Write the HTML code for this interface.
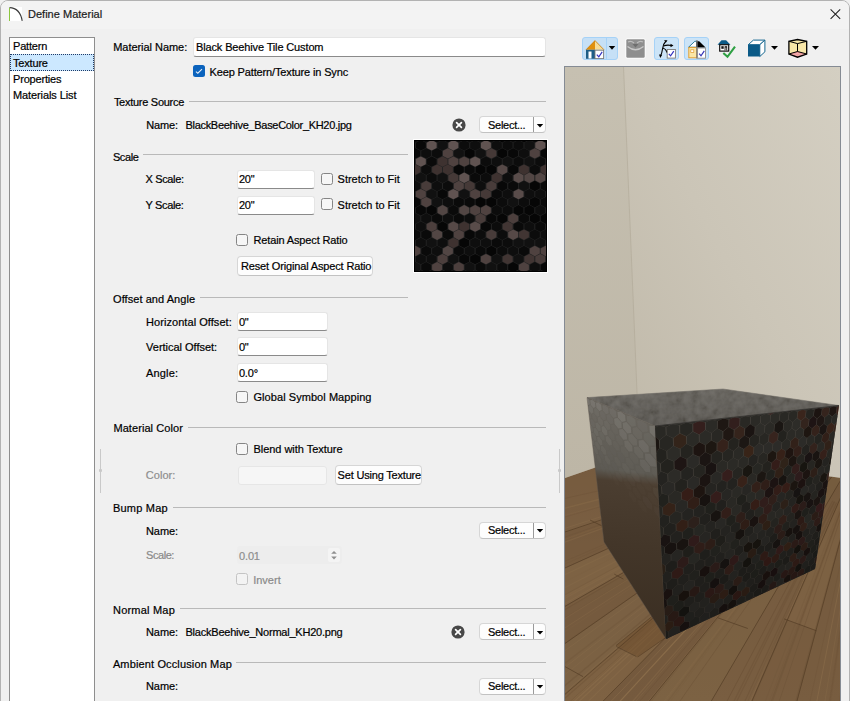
<!DOCTYPE html><html><head><meta charset="utf-8"><style>html,body{margin:0;padding:0;width:850px;height:701px;overflow:hidden;background:#f0f0f0}.t{position:absolute;white-space:nowrap;line-height:13px;font-family:"Liberation Sans", sans-serif;-webkit-text-stroke:0.2px currentColor}</style></head><body><div style="position:absolute;left:0;top:0;width:848px;height:720px;border:1px solid #b2b2b2;border-radius:8px 8px 0 0;background:#f0f0f0;overflow:hidden"><div style="position:absolute;left:0;top:0;width:848px;height:28px;background:#f3f3f3"></div></div><svg style="position:absolute;left:8px;top:6px" width="16" height="16"><rect x="1" y="1" width="13" height="14" fill="#fff"/><path d="M1.5 1.6 Q12 2 14.2 14.8" fill="none" stroke="#3a3a3a" stroke-width="1.1"/><path d="M1.5 1.8 L1.5 15" stroke="#8cc63f" stroke-width="1"/></svg><div class="t" style="left:28.00px;top:7.79px;font-size:11px;letter-spacing:0.014px;color:#1b1b1b;">Define Material</div><svg style="position:absolute;left:828px;top:7px" width="14" height="14"><path d="M2.6 2.3 L12.2 11.8 M12.2 2.3 L2.6 11.8" stroke="#202020" stroke-width="1.05"/></svg><div style="position:absolute;left:9px;top:37px;width:84px;height:680px;border:1px solid #8e8e8e;background:#fff"></div><div style="position:absolute;left:10px;top:54px;width:82px;height:15px;background:#cce8ff;border:1px dotted #1f3a66"></div><div class="t" style="left:13.00px;top:40.39px;font-size:11px;letter-spacing:-0.180px;color:#000;">Pattern</div><div class="t" style="left:13.00px;top:56.69px;font-size:11px;letter-spacing:-0.180px;color:#000;">Texture</div><div class="t" style="left:13.00px;top:73.09px;font-size:11px;letter-spacing:-0.180px;color:#000;">Properties</div><div class="t" style="left:13.00px;top:89.39px;font-size:11px;letter-spacing:-0.100px;color:#000;">Materials List</div><div class="t" style="left:113.20px;top:41.19px;font-size:11px;letter-spacing:-0.041px;color:#000;">Material Name:</div><div style="position:absolute;left:193px;top:37px;width:351px;height:18px;border:1px solid #e5e5e5;border-bottom:1px solid #8a8a8a;border-radius:3px;background:#fff"></div><div class="t" style="left:196.00px;top:41.29px;font-size:11px;letter-spacing:-0.138px;color:#000;">Black Beehive Tile Custom</div><div style="position:absolute;left:193px;top:65px;width:12px;height:12px;border-radius:2.5px;background:#0b63bd"></div><svg style="position:absolute;left:193px;top:65px" width="12" height="12"><path d="M2.9 6.6 L4.8 8.2 L9 4.1" fill="none" stroke="#e6eef8" stroke-width="1.05"/></svg><div class="t" style="left:209.60px;top:65.69px;font-size:11px;letter-spacing:-0.145px;color:#000;">Keep Pattern/Texture in Sync</div><div class="t" style="left:113.90px;top:96.19px;font-size:11px;letter-spacing:-0.270px;color:#000;">Texture Source</div><div style="position:absolute;left:189px;top:101px;width:357px;height:1px;background:#b9b9b9"></div><div class="t" style="left:146.20px;top:118.99px;font-size:11px;letter-spacing:-0.161px;color:#000;">Name:</div><div class="t" style="left:185.50px;top:118.99px;font-size:11px;letter-spacing:-0.306px;color:#000;">BlackBeehive_BaseColor_KH20.jpg</div><svg style="position:absolute;left:450.8px;top:116.6px" width="16" height="16"><circle cx="8" cy="8" r="6.6" fill="#484848"/><path d="M5.6 5.6 L10.4 10.4 M10.4 5.6 L5.6 10.4" stroke="#fff" stroke-width="1.7" stroke-linecap="round"/></svg><div style="position:absolute;left:479px;top:116px;width:65px;height:15px;border:1px solid #d6d6d6;border-bottom-color:#c2c2c2;border-radius:4px;background:#fdfdfd"></div><div style="position:absolute;left:533px;top:117px;width:1px;height:15px;background:#9a9a9a"></div><svg style="position:absolute;left:536px;top:122.5px" width="8" height="6"><path d="M0.8 1 L7.2 1 L4 4.6 Z" fill="#000"/></svg><div class="t" style="left:488.00px;top:118.89px;font-size:11px;letter-spacing:-0.272px;color:#000;">Select...</div><div class="t" style="left:112.90px;top:150.59px;font-size:11px;letter-spacing:-0.406px;color:#000;">Scale</div><div style="position:absolute;left:143px;top:154px;width:265px;height:1px;background:#b9b9b9"></div><div class="t" style="left:145.60px;top:173.19px;font-size:11px;letter-spacing:-0.371px;color:#000;">X Scale:</div><div style="position:absolute;left:237px;top:170px;width:76px;height:17px;border:1px solid #e5e5e5;border-bottom:1px solid #8a8a8a;border-radius:3px;background:#fff"></div><div class="t" style="left:238.90px;top:173.19px;font-size:11px;letter-spacing:-0.180px;color:#000;">20&quot;</div><div style="position:absolute;left:321px;top:173px;width:10px;height:10px;border:1px solid #858585;border-radius:2.5px;background:#f6f6f6"></div><div class="t" style="left:337.60px;top:173.19px;font-size:11px;letter-spacing:-0.011px;color:#000;">Stretch to Fit</div><div class="t" style="left:145.60px;top:198.59px;font-size:11px;letter-spacing:-0.348px;color:#000;">Y Scale:</div><div style="position:absolute;left:237px;top:196px;width:76px;height:17px;border:1px solid #e5e5e5;border-bottom:1px solid #8a8a8a;border-radius:3px;background:#fff"></div><div class="t" style="left:238.90px;top:198.59px;font-size:11px;letter-spacing:-0.180px;color:#000;">20&quot;</div><div style="position:absolute;left:321px;top:198px;width:10px;height:10px;border:1px solid #858585;border-radius:2.5px;background:#f6f6f6"></div><div class="t" style="left:337.60px;top:198.59px;font-size:11px;letter-spacing:-0.011px;color:#000;">Stretch to Fit</div><div style="position:absolute;left:236px;top:234px;width:10px;height:10px;border:1px solid #858585;border-radius:2.5px;background:#f6f6f6"></div><div class="t" style="left:253.50px;top:234.49px;font-size:11px;letter-spacing:-0.138px;color:#000;">Retain Aspect Ratio</div><div style="position:absolute;left:237px;top:256px;width:134px;height:18px;border:1px solid #d6d6d6;border-bottom-color:#c2c2c2;border-radius:4px;background:#fdfdfd"></div><div class="t" style="left:241.00px;top:260.19px;font-size:11px;letter-spacing:-0.156px;color:#000;">Reset Original Aspect Ratio</div><div class="t" style="left:113.10px;top:292.59px;font-size:11px;letter-spacing:0.054px;color:#000;">Offset and Angle</div><div style="position:absolute;left:200px;top:297px;width:208px;height:1px;background:#b9b9b9"></div><div class="t" style="left:146.10px;top:315.59px;font-size:11px;letter-spacing:0.051px;color:#000;">Horizontal Offset:</div><div style="position:absolute;left:237px;top:312px;width:89px;height:17px;border:1px solid #e5e5e5;border-bottom:1px solid #8a8a8a;border-radius:3px;background:#fff"></div><div class="t" style="left:238.90px;top:315.59px;font-size:11px;letter-spacing:-0.180px;color:#000;">0&quot;</div><div class="t" style="left:146.10px;top:341.29px;font-size:11px;letter-spacing:-0.021px;color:#000;">Vertical Offset:</div><div style="position:absolute;left:237px;top:337px;width:89px;height:17px;border:1px solid #e5e5e5;border-bottom:1px solid #8a8a8a;border-radius:3px;background:#fff"></div><div class="t" style="left:238.90px;top:341.29px;font-size:11px;letter-spacing:-0.180px;color:#000;">0&quot;</div><div class="t" style="left:146.10px;top:366.89px;font-size:11px;letter-spacing:0.133px;color:#000;">Angle:</div><div style="position:absolute;left:237px;top:363px;width:89px;height:17px;border:1px solid #e5e5e5;border-bottom:1px solid #8a8a8a;border-radius:3px;background:#fff"></div><div class="t" style="left:238.90px;top:366.89px;font-size:11px;letter-spacing:-0.180px;color:#000;">0.0&deg;</div><div style="position:absolute;left:236px;top:391px;width:10px;height:10px;border:1px solid #858585;border-radius:2.5px;background:#f6f6f6"></div><div class="t" style="left:253.50px;top:391.49px;font-size:11px;letter-spacing:0.057px;color:#000;">Global Symbol Mapping</div><div class="t" style="left:113.40px;top:422.19px;font-size:11px;letter-spacing:0.074px;color:#000;">Material Color</div><div style="position:absolute;left:188px;top:427px;width:358px;height:1px;background:#b9b9b9"></div><div style="position:absolute;left:236px;top:443px;width:10px;height:10px;border:1px solid #858585;border-radius:2.5px;background:#f6f6f6"></div><div class="t" style="left:253.50px;top:443.29px;font-size:11px;letter-spacing:-0.038px;color:#000;">Blend with Texture</div><div class="t" style="left:145.80px;top:469.49px;font-size:11px;letter-spacing:0.026px;color:#8d8d8d;">Color:</div><div style="position:absolute;left:238px;top:466px;width:87px;height:17px;border:1px solid #e6e6e6;border-radius:3px;background:#f6f6f6"></div><div style="position:absolute;left:335px;top:465px;width:85px;height:18px;border:1px solid #d6d6d6;border-bottom-color:#c2c2c2;border-radius:4px;background:#fdfdfd"></div><div class="t" style="left:337.60px;top:469.39px;font-size:11px;letter-spacing:-0.190px;color:#000;">Set Using Texture</div><div style="position:absolute;left:100px;top:449px;width:1px;height:44px;background:#c9c9c9"></div><div style="position:absolute;left:99px;top:469px;width:3px;height:3px;background:#c9c9c9;border-radius:1px"></div><div style="position:absolute;left:559px;top:449px;width:1px;height:44px;background:#c9c9c9"></div><div style="position:absolute;left:558px;top:469px;width:3px;height:3px;background:#c9c9c9;border-radius:1px"></div><div class="t" style="left:112.90px;top:502.19px;font-size:11px;letter-spacing:0.225px;color:#000;">Bump Map</div><div style="position:absolute;left:173px;top:507px;width:373px;height:1px;background:#b9b9b9"></div><div class="t" style="left:146.00px;top:524.69px;font-size:11px;letter-spacing:-0.081px;color:#000;">Name:</div><div style="position:absolute;left:479px;top:521.5px;width:65px;height:15px;border:1px solid #d6d6d6;border-bottom-color:#c2c2c2;border-radius:4px;background:#fdfdfd"></div><div style="position:absolute;left:533px;top:522.5px;width:1px;height:15px;background:#9a9a9a"></div><svg style="position:absolute;left:536px;top:528.0px" width="8" height="6"><path d="M0.8 1 L7.2 1 L4 4.6 Z" fill="#000"/></svg><div class="t" style="left:488.00px;top:524.39px;font-size:11px;letter-spacing:-0.272px;color:#000;">Select...</div><div class="t" style="left:146.00px;top:549.49px;font-size:11px;letter-spacing:-0.430px;color:#8a8a8a;">Scale:</div><div style="position:absolute;left:237px;top:546px;width:105px;height:18px;background:#ededed;border-radius:3px"></div><div class="t" style="left:239.10px;top:549.69px;font-size:11px;letter-spacing:-0.180px;color:#8d8d8d;">0.01</div><div style="position:absolute;left:328px;top:548px;width:12px;height:14px;background:#f4f4f4;border-radius:2px"></div><svg style="position:absolute;left:329px;top:548px" width="10" height="14"><path d="M2.2 5.8 L5 3 L7.8 5.8 Z M2.2 8.6 L5 11.4 L7.8 8.6 Z" fill="#8e8e8e"/></svg><div style="position:absolute;left:236px;top:573px;width:10px;height:10px;border:1px solid #c4c4c4;border-radius:2.5px;background:#f3f3f3"></div><div class="t" style="left:253.20px;top:573.89px;font-size:11px;letter-spacing:-0.003px;color:#8a8a8a;">Invert</div><div class="t" style="left:113.00px;top:604.09px;font-size:11px;letter-spacing:0.209px;color:#000;">Normal Map</div><div style="position:absolute;left:180px;top:608px;width:366px;height:1px;background:#b9b9b9"></div><div class="t" style="left:146.00px;top:626.09px;font-size:11px;letter-spacing:-0.081px;color:#000;">Name:</div><div class="t" style="left:185.50px;top:626.09px;font-size:11px;letter-spacing:-0.224px;color:#000;">BlackBeehive_Normal_KH20.png</div><svg style="position:absolute;left:450.4px;top:624.3px" width="16" height="16"><circle cx="8" cy="8" r="6.6" fill="#484848"/><path d="M5.6 5.6 L10.4 10.4 M10.4 5.6 L5.6 10.4" stroke="#fff" stroke-width="1.7" stroke-linecap="round"/></svg><div style="position:absolute;left:479px;top:623.3px;width:65px;height:15px;border:1px solid #d6d6d6;border-bottom-color:#c2c2c2;border-radius:4px;background:#fdfdfd"></div><div style="position:absolute;left:533px;top:624.3px;width:1px;height:15px;background:#9a9a9a"></div><svg style="position:absolute;left:536px;top:629.8px" width="8" height="6"><path d="M0.8 1 L7.2 1 L4 4.6 Z" fill="#000"/></svg><div class="t" style="left:488.00px;top:626.19px;font-size:11px;letter-spacing:-0.272px;color:#000;">Select...</div><div class="t" style="left:112.90px;top:657.69px;font-size:11px;letter-spacing:0.135px;color:#000;">Ambient Occlusion Map</div><div style="position:absolute;left:236px;top:662px;width:310px;height:1px;background:#b9b9b9"></div><div class="t" style="left:146.00px;top:680.49px;font-size:11px;letter-spacing:-0.081px;color:#000;">Name:</div><div style="position:absolute;left:479px;top:677.6px;width:65px;height:15px;border:1px solid #d6d6d6;border-bottom-color:#c2c2c2;border-radius:4px;background:#fdfdfd"></div><div style="position:absolute;left:533px;top:678.6px;width:1px;height:15px;background:#9a9a9a"></div><svg style="position:absolute;left:536px;top:684.1px" width="8" height="6"><path d="M0.8 1 L7.2 1 L4 4.6 Z" fill="#000"/></svg><div class="t" style="left:488.00px;top:680.49px;font-size:11px;letter-spacing:-0.272px;color:#000;">Select...</div><svg style="position:absolute;left:413px;top:139px" width="135" height="134"><rect x="0" y="0" width="135" height="134" fill="#fff"/><svg x="1" y="1" width="133" height="132"><rect width="133" height="132" fill="#232323"/><polygon points="-9.5,-8.0 -4.5,-5.4 -4.5,-0.2 -9.5,2.4 -14.4,-0.2 -14.4,-5.4" fill="rgb(8,8,8)"/><polygon points="1.4,-8.0 6.3,-5.4 6.3,-0.2 1.4,2.4 -3.6,-0.2 -3.6,-5.4" fill="rgb(14,14,14)"/><polygon points="12.2,-8.0 17.2,-5.4 17.2,-0.2 12.2,2.4 7.3,-0.2 7.3,-5.4" fill="rgb(14,14,14)"/><polygon points="23.1,-8.0 28.0,-5.4 28.0,-0.2 23.1,2.4 18.1,-0.2 18.1,-5.4" fill="rgb(8,8,8)"/><polygon points="33.9,-8.0 38.9,-5.4 38.9,-0.2 33.9,2.4 29.0,-0.2 29.0,-5.4" fill="rgb(10,10,10)"/><polygon points="44.8,-8.0 49.8,-5.4 49.8,-0.2 44.8,2.4 39.9,-0.2 39.9,-5.4" fill="rgb(14,14,14)"/><polygon points="55.7,-8.0 60.6,-5.4 60.6,-0.2 55.7,2.4 50.7,-0.2 50.7,-5.4" fill="rgb(12,12,12)"/><polygon points="66.5,-8.0 71.5,-5.4 71.5,-0.2 66.5,2.4 61.6,-0.2 61.6,-5.4" fill="rgb(17,17,17)"/><polygon points="77.4,-8.0 82.3,-5.4 82.3,-0.2 77.4,2.4 72.4,-0.2 72.4,-5.4" fill="rgb(14,14,14)"/><polygon points="88.2,-8.0 93.2,-5.4 93.2,-0.2 88.2,2.4 83.3,-0.2 83.3,-5.4" fill="rgb(6,6,6)"/><polygon points="99.1,-8.0 104.1,-5.4 104.1,-0.2 99.1,2.4 94.2,-0.2 94.2,-5.4" fill="rgb(14,14,14)"/><polygon points="110.0,-8.0 114.9,-5.4 114.9,-0.2 110.0,2.4 105.0,-0.2 105.0,-5.4" fill="rgb(6,6,6)"/><polygon points="120.8,-8.0 125.8,-5.4 125.8,-0.2 120.8,2.4 115.9,-0.2 115.9,-5.4" fill="rgb(12,12,12)"/><polygon points="131.7,-8.0 136.6,-5.4 136.6,-0.2 131.7,2.4 126.7,-0.2 126.7,-5.4" fill="rgb(10,10,10)"/><polygon points="142.5,-8.0 147.5,-5.4 147.5,-0.2 142.5,2.4 137.6,-0.2 137.6,-5.4" fill="rgb(14,14,14)"/><polygon points="-4.1,0.1 0.9,2.7 0.9,7.9 -4.1,10.5 -9.0,7.9 -9.0,2.7" fill="rgb(8,8,8)"/><polygon points="6.8,0.1 11.8,2.7 11.8,7.9 6.8,10.5 1.9,7.9 1.9,2.7" fill="rgb(8,8,8)"/><polygon points="17.7,0.1 22.6,2.7 22.6,7.9 17.7,10.5 12.7,7.9 12.7,2.7" fill="rgb(96,83,81)"/><polygon points="28.5,0.1 33.5,2.7 33.5,7.9 28.5,10.5 23.6,7.9 23.6,2.7" fill="rgb(17,17,17)"/><polygon points="39.4,0.1 44.3,2.7 44.3,7.9 39.4,10.5 34.4,7.9 34.4,2.7" fill="rgb(96,83,81)"/><polygon points="50.2,0.1 55.2,2.7 55.2,7.9 50.2,10.5 45.3,7.9 45.3,2.7" fill="rgb(12,12,12)"/><polygon points="61.1,0.1 66.1,2.7 66.1,7.9 61.1,10.5 56.2,7.9 56.2,2.7" fill="rgb(14,14,14)"/><polygon points="72.0,0.1 76.9,2.7 76.9,7.9 72.0,10.5 67.0,7.9 67.0,2.7" fill="rgb(96,83,81)"/><polygon points="82.8,0.1 87.8,2.7 87.8,7.9 82.8,10.5 77.9,7.9 77.9,2.7" fill="rgb(14,14,14)"/><polygon points="93.7,0.1 98.6,2.7 98.6,7.9 93.7,10.5 88.7,7.9 88.7,2.7" fill="rgb(12,12,12)"/><polygon points="104.5,0.1 109.5,2.7 109.5,7.9 104.5,10.5 99.6,7.9 99.6,2.7" fill="rgb(12,12,12)"/><polygon points="115.4,0.1 120.3,2.7 120.3,7.9 115.4,10.5 110.4,7.9 110.4,2.7" fill="rgb(17,17,17)"/><polygon points="126.3,0.1 131.2,2.7 131.2,7.9 126.3,10.5 121.3,7.9 121.3,2.7" fill="rgb(96,83,81)"/><polygon points="137.1,0.1 142.1,2.7 142.1,7.9 137.1,10.5 132.2,7.9 132.2,2.7" fill="rgb(8,8,8)"/><polygon points="148.0,0.1 152.9,2.7 152.9,7.9 148.0,10.5 143.0,7.9 143.0,2.7" fill="rgb(8,8,8)"/><polygon points="-9.5,8.2 -4.5,10.8 -4.5,16.0 -9.5,18.6 -14.4,16.0 -14.4,10.8" fill="rgb(17,17,17)"/><polygon points="1.4,8.2 6.3,10.8 6.3,16.0 1.4,18.6 -3.6,16.0 -3.6,10.8" fill="rgb(8,8,8)"/><polygon points="12.2,8.2 17.2,10.8 17.2,16.0 12.2,18.6 7.3,16.0 7.3,10.8" fill="rgb(14,14,14)"/><polygon points="23.1,8.2 28.0,10.8 28.0,16.0 23.1,18.6 18.1,16.0 18.1,10.8" fill="rgb(12,12,12)"/><polygon points="33.9,8.2 38.9,10.8 38.9,16.0 33.9,18.6 29.0,16.0 29.0,10.8" fill="rgb(79,66,64)"/><polygon points="44.8,8.2 49.8,10.8 49.8,16.0 44.8,18.6 39.9,16.0 39.9,10.8" fill="rgb(17,17,17)"/><polygon points="55.7,8.2 60.6,10.8 60.6,16.0 55.7,18.6 50.7,16.0 50.7,10.8" fill="rgb(6,6,6)"/><polygon points="66.5,8.2 71.5,10.8 71.5,16.0 66.5,18.6 61.6,16.0 61.6,10.8" fill="rgb(17,17,17)"/><polygon points="77.4,8.2 82.3,10.8 82.3,16.0 77.4,18.6 72.4,16.0 72.4,10.8" fill="rgb(69,57,55)"/><polygon points="88.2,8.2 93.2,10.8 93.2,16.0 88.2,18.6 83.3,16.0 83.3,10.8" fill="rgb(6,6,6)"/><polygon points="99.1,8.2 104.1,10.8 104.1,16.0 99.1,18.6 94.2,16.0 94.2,10.8" fill="rgb(8,8,8)"/><polygon points="110.0,8.2 114.9,10.8 114.9,16.0 110.0,18.6 105.0,16.0 105.0,10.8" fill="rgb(14,14,14)"/><polygon points="120.8,8.2 125.8,10.8 125.8,16.0 120.8,18.6 115.9,16.0 115.9,10.8" fill="rgb(79,66,64)"/><polygon points="131.7,8.2 136.6,10.8 136.6,16.0 131.7,18.6 126.7,16.0 126.7,10.8" fill="rgb(6,6,6)"/><polygon points="142.5,8.2 147.5,10.8 147.5,16.0 142.5,18.6 137.6,16.0 137.6,10.8" fill="rgb(10,10,10)"/><polygon points="-4.1,16.4 0.9,19.0 0.9,24.2 -4.1,26.8 -9.0,24.2 -9.0,19.0" fill="rgb(6,6,6)"/><polygon points="6.8,16.4 11.8,19.0 11.8,24.2 6.8,26.8 1.9,24.2 1.9,19.0" fill="rgb(96,83,81)"/><polygon points="17.7,16.4 22.6,19.0 22.6,24.2 17.7,26.8 12.7,24.2 12.7,19.0" fill="rgb(10,10,10)"/><polygon points="28.5,16.4 33.5,19.0 33.5,24.2 28.5,26.8 23.6,24.2 23.6,19.0" fill="rgb(62,50,48)"/><polygon points="39.4,16.4 44.3,19.0 44.3,24.2 39.4,26.8 34.4,24.2 34.4,19.0" fill="rgb(79,66,64)"/><polygon points="50.2,16.4 55.2,19.0 55.2,24.2 50.2,26.8 45.3,24.2 45.3,19.0" fill="rgb(79,66,64)"/><polygon points="61.1,16.4 66.1,19.0 66.1,24.2 61.1,26.8 56.2,24.2 56.2,19.0" fill="rgb(96,83,81)"/><polygon points="72.0,16.4 76.9,19.0 76.9,24.2 72.0,26.8 67.0,24.2 67.0,19.0" fill="rgb(12,12,12)"/><polygon points="82.8,16.4 87.8,19.0 87.8,24.2 82.8,26.8 77.9,24.2 77.9,19.0" fill="rgb(14,14,14)"/><polygon points="93.7,16.4 98.6,19.0 98.6,24.2 93.7,26.8 88.7,24.2 88.7,19.0" fill="rgb(17,17,17)"/><polygon points="104.5,16.4 109.5,19.0 109.5,24.2 104.5,26.8 99.6,24.2 99.6,19.0" fill="rgb(12,12,12)"/><polygon points="115.4,16.4 120.3,19.0 120.3,24.2 115.4,26.8 110.4,24.2 110.4,19.0" fill="rgb(17,17,17)"/><polygon points="126.3,16.4 131.2,19.0 131.2,24.2 126.3,26.8 121.3,24.2 121.3,19.0" fill="rgb(12,12,12)"/><polygon points="137.1,16.4 142.1,19.0 142.1,24.2 137.1,26.8 132.2,24.2 132.2,19.0" fill="rgb(12,12,12)"/><polygon points="148.0,16.4 152.9,19.0 152.9,24.2 148.0,26.8 143.0,24.2 143.0,19.0" fill="rgb(17,17,17)"/><polygon points="-9.5,24.5 -4.5,27.1 -4.5,32.3 -9.5,34.9 -14.4,32.3 -14.4,27.1" fill="rgb(14,14,14)"/><polygon points="1.4,24.5 6.3,27.1 6.3,32.3 1.4,34.9 -3.6,32.3 -3.6,27.1" fill="rgb(62,50,48)"/><polygon points="12.2,24.5 17.2,27.1 17.2,32.3 12.2,34.9 7.3,32.3 7.3,27.1" fill="rgb(12,12,12)"/><polygon points="23.1,24.5 28.0,27.1 28.0,32.3 23.1,34.9 18.1,32.3 18.1,27.1" fill="rgb(62,50,48)"/><polygon points="33.9,24.5 38.9,27.1 38.9,32.3 33.9,34.9 29.0,32.3 29.0,27.1" fill="rgb(62,50,48)"/><polygon points="44.8,24.5 49.8,27.1 49.8,32.3 44.8,34.9 39.9,32.3 39.9,27.1" fill="rgb(8,8,8)"/><polygon points="55.7,24.5 60.6,27.1 60.6,32.3 55.7,34.9 50.7,32.3 50.7,27.1" fill="rgb(10,10,10)"/><polygon points="66.5,24.5 71.5,27.1 71.5,32.3 66.5,34.9 61.6,32.3 61.6,27.1" fill="rgb(6,6,6)"/><polygon points="77.4,24.5 82.3,27.1 82.3,32.3 77.4,34.9 72.4,32.3 72.4,27.1" fill="rgb(6,6,6)"/><polygon points="88.2,24.5 93.2,27.1 93.2,32.3 88.2,34.9 83.3,32.3 83.3,27.1" fill="rgb(86,73,71)"/><polygon points="99.1,24.5 104.1,27.1 104.1,32.3 99.1,34.9 94.2,32.3 94.2,27.1" fill="rgb(8,8,8)"/><polygon points="110.0,24.5 114.9,27.1 114.9,32.3 110.0,34.9 105.0,32.3 105.0,27.1" fill="rgb(62,50,48)"/><polygon points="120.8,24.5 125.8,27.1 125.8,32.3 120.8,34.9 115.9,32.3 115.9,27.1" fill="rgb(12,12,12)"/><polygon points="131.7,24.5 136.6,27.1 136.6,32.3 131.7,34.9 126.7,32.3 126.7,27.1" fill="rgb(62,50,48)"/><polygon points="142.5,24.5 147.5,27.1 147.5,32.3 142.5,34.9 137.6,32.3 137.6,27.1" fill="rgb(8,8,8)"/><polygon points="-4.1,32.6 0.9,35.2 0.9,40.4 -4.1,43.0 -9.0,40.4 -9.0,35.2" fill="rgb(10,10,10)"/><polygon points="6.8,32.6 11.8,35.2 11.8,40.4 6.8,43.0 1.9,40.4 1.9,35.2" fill="rgb(17,17,17)"/><polygon points="17.7,32.6 22.6,35.2 22.6,40.4 17.7,43.0 12.7,40.4 12.7,35.2" fill="rgb(12,12,12)"/><polygon points="28.5,32.6 33.5,35.2 33.5,40.4 28.5,43.0 23.6,40.4 23.6,35.2" fill="rgb(17,17,17)"/><polygon points="39.4,32.6 44.3,35.2 44.3,40.4 39.4,43.0 34.4,40.4 34.4,35.2" fill="rgb(69,57,55)"/><polygon points="50.2,32.6 55.2,35.2 55.2,40.4 50.2,43.0 45.3,40.4 45.3,35.2" fill="rgb(96,83,81)"/><polygon points="61.1,32.6 66.1,35.2 66.1,40.4 61.1,43.0 56.2,40.4 56.2,35.2" fill="rgb(10,10,10)"/><polygon points="72.0,32.6 76.9,35.2 76.9,40.4 72.0,43.0 67.0,40.4 67.0,35.2" fill="rgb(12,12,12)"/><polygon points="82.8,32.6 87.8,35.2 87.8,40.4 82.8,43.0 77.9,40.4 77.9,35.2" fill="rgb(62,50,48)"/><polygon points="93.7,32.6 98.6,35.2 98.6,40.4 93.7,43.0 88.7,40.4 88.7,35.2" fill="rgb(14,14,14)"/><polygon points="104.5,32.6 109.5,35.2 109.5,40.4 104.5,43.0 99.6,40.4 99.6,35.2" fill="rgb(89,76,74)"/><polygon points="115.4,32.6 120.3,35.2 120.3,40.4 115.4,43.0 110.4,40.4 110.4,35.2" fill="rgb(82,70,68)"/><polygon points="126.3,32.6 131.2,35.2 131.2,40.4 126.3,43.0 121.3,40.4 121.3,35.2" fill="rgb(82,70,68)"/><polygon points="137.1,32.6 142.1,35.2 142.1,40.4 137.1,43.0 132.2,40.4 132.2,35.2" fill="rgb(12,12,12)"/><polygon points="148.0,32.6 152.9,35.2 152.9,40.4 148.0,43.0 143.0,40.4 143.0,35.2" fill="rgb(14,14,14)"/><polygon points="-9.5,40.8 -4.5,43.4 -4.5,48.6 -9.5,51.2 -14.4,48.6 -14.4,43.4" fill="rgb(10,10,10)"/><polygon points="1.4,40.8 6.3,43.4 6.3,48.6 1.4,51.2 -3.6,48.6 -3.6,43.4" fill="rgb(14,14,14)"/><polygon points="12.2,40.8 17.2,43.4 17.2,48.6 12.2,51.2 7.3,48.6 7.3,43.4" fill="rgb(72,60,58)"/><polygon points="23.1,40.8 28.0,43.4 28.0,48.6 23.1,51.2 18.1,48.6 18.1,43.4" fill="rgb(14,14,14)"/><polygon points="33.9,40.8 38.9,43.4 38.9,48.6 33.9,51.2 29.0,48.6 29.0,43.4" fill="rgb(12,12,12)"/><polygon points="44.8,40.8 49.8,43.4 49.8,48.6 44.8,51.2 39.9,48.6 39.9,43.4" fill="rgb(79,66,64)"/><polygon points="55.7,40.8 60.6,43.4 60.6,48.6 55.7,51.2 50.7,48.6 50.7,43.4" fill="rgb(69,57,55)"/><polygon points="66.5,40.8 71.5,43.4 71.5,48.6 66.5,51.2 61.6,48.6 61.6,43.4" fill="rgb(14,14,14)"/><polygon points="77.4,40.8 82.3,43.4 82.3,48.6 77.4,51.2 72.4,48.6 72.4,43.4" fill="rgb(72,60,58)"/><polygon points="88.2,40.8 93.2,43.4 93.2,48.6 88.2,51.2 83.3,48.6 83.3,43.4" fill="rgb(8,8,8)"/><polygon points="99.1,40.8 104.1,43.4 104.1,48.6 99.1,51.2 94.2,48.6 94.2,43.4" fill="rgb(10,10,10)"/><polygon points="110.0,40.8 114.9,43.4 114.9,48.6 110.0,51.2 105.0,48.6 105.0,43.4" fill="rgb(17,17,17)"/><polygon points="120.8,40.8 125.8,43.4 125.8,48.6 120.8,51.2 115.9,48.6 115.9,43.4" fill="rgb(6,6,6)"/><polygon points="131.7,40.8 136.6,43.4 136.6,48.6 131.7,51.2 126.7,48.6 126.7,43.4" fill="rgb(10,10,10)"/><polygon points="142.5,40.8 147.5,43.4 147.5,48.6 142.5,51.2 137.6,48.6 137.6,43.4" fill="rgb(14,14,14)"/><polygon points="-4.1,48.9 0.9,51.5 0.9,56.7 -4.1,59.3 -9.0,56.7 -9.0,51.5" fill="rgb(17,17,17)"/><polygon points="6.8,48.9 11.8,51.5 11.8,56.7 6.8,59.3 1.9,56.7 1.9,51.5" fill="rgb(79,66,64)"/><polygon points="17.7,48.9 22.6,51.5 22.6,56.7 17.7,59.3 12.7,56.7 12.7,51.5" fill="rgb(17,17,17)"/><polygon points="28.5,48.9 33.5,51.5 33.5,56.7 28.5,59.3 23.6,56.7 23.6,51.5" fill="rgb(8,8,8)"/><polygon points="39.4,48.9 44.3,51.5 44.3,56.7 39.4,59.3 34.4,56.7 34.4,51.5" fill="rgb(96,83,81)"/><polygon points="50.2,48.9 55.2,51.5 55.2,56.7 50.2,59.3 45.3,56.7 45.3,51.5" fill="rgb(17,17,17)"/><polygon points="61.1,48.9 66.1,51.5 66.1,56.7 61.1,59.3 56.2,56.7 56.2,51.5" fill="rgb(79,66,64)"/><polygon points="72.0,48.9 76.9,51.5 76.9,56.7 72.0,59.3 67.0,56.7 67.0,51.5" fill="rgb(69,57,55)"/><polygon points="82.8,48.9 87.8,51.5 87.8,56.7 82.8,59.3 77.9,56.7 77.9,51.5" fill="rgb(10,10,10)"/><polygon points="93.7,48.9 98.6,51.5 98.6,56.7 93.7,59.3 88.7,56.7 88.7,51.5" fill="rgb(14,14,14)"/><polygon points="104.5,48.9 109.5,51.5 109.5,56.7 104.5,59.3 99.6,56.7 99.6,51.5" fill="rgb(89,76,74)"/><polygon points="115.4,48.9 120.3,51.5 120.3,56.7 115.4,59.3 110.4,56.7 110.4,51.5" fill="rgb(14,14,14)"/><polygon points="126.3,48.9 131.2,51.5 131.2,56.7 126.3,59.3 121.3,56.7 121.3,51.5" fill="rgb(14,14,14)"/><polygon points="137.1,48.9 142.1,51.5 142.1,56.7 137.1,59.3 132.2,56.7 132.2,51.5" fill="rgb(6,6,6)"/><polygon points="148.0,48.9 152.9,51.5 152.9,56.7 148.0,59.3 143.0,56.7 143.0,51.5" fill="rgb(17,17,17)"/><polygon points="-9.5,57.0 -4.5,59.6 -4.5,64.8 -9.5,67.4 -14.4,64.8 -14.4,59.6" fill="rgb(17,17,17)"/><polygon points="1.4,57.0 6.3,59.6 6.3,64.8 1.4,67.4 -3.6,64.8 -3.6,59.6" fill="rgb(8,8,8)"/><polygon points="12.2,57.0 17.2,59.6 17.2,64.8 12.2,67.4 7.3,64.8 7.3,59.6" fill="rgb(79,66,64)"/><polygon points="23.1,57.0 28.0,59.6 28.0,64.8 23.1,67.4 18.1,64.8 18.1,59.6" fill="rgb(17,17,17)"/><polygon points="33.9,57.0 38.9,59.6 38.9,64.8 33.9,67.4 29.0,64.8 29.0,59.6" fill="rgb(14,14,14)"/><polygon points="44.8,57.0 49.8,59.6 49.8,64.8 44.8,67.4 39.9,64.8 39.9,59.6" fill="rgb(10,10,10)"/><polygon points="55.7,57.0 60.6,59.6 60.6,64.8 55.7,67.4 50.7,64.8 50.7,59.6" fill="rgb(10,10,10)"/><polygon points="66.5,57.0 71.5,59.6 71.5,64.8 66.5,67.4 61.6,64.8 61.6,59.6" fill="rgb(6,6,6)"/><polygon points="77.4,57.0 82.3,59.6 82.3,64.8 77.4,67.4 72.4,64.8 72.4,59.6" fill="rgb(6,6,6)"/><polygon points="88.2,57.0 93.2,59.6 93.2,64.8 88.2,67.4 83.3,64.8 83.3,59.6" fill="rgb(12,12,12)"/><polygon points="99.1,57.0 104.1,59.6 104.1,64.8 99.1,67.4 94.2,64.8 94.2,59.6" fill="rgb(17,17,17)"/><polygon points="110.0,57.0 114.9,59.6 114.9,64.8 110.0,67.4 105.0,64.8 105.0,59.6" fill="rgb(12,12,12)"/><polygon points="120.8,57.0 125.8,59.6 125.8,64.8 120.8,67.4 115.9,64.8 115.9,59.6" fill="rgb(6,6,6)"/><polygon points="131.7,57.0 136.6,59.6 136.6,64.8 131.7,67.4 126.7,64.8 126.7,59.6" fill="rgb(10,10,10)"/><polygon points="142.5,57.0 147.5,59.6 147.5,64.8 142.5,67.4 137.6,64.8 137.6,59.6" fill="rgb(6,6,6)"/><polygon points="-4.1,65.1 0.9,67.7 0.9,72.9 -4.1,75.5 -9.0,72.9 -9.0,67.7" fill="rgb(12,12,12)"/><polygon points="6.8,65.1 11.8,67.7 11.8,72.9 6.8,75.5 1.9,72.9 1.9,67.7" fill="rgb(8,8,8)"/><polygon points="17.7,65.1 22.6,67.7 22.6,72.9 17.7,75.5 12.7,72.9 12.7,67.7" fill="rgb(6,6,6)"/><polygon points="28.5,65.1 33.5,67.7 33.5,72.9 28.5,75.5 23.6,72.9 23.6,67.7" fill="rgb(82,70,68)"/><polygon points="39.4,65.1 44.3,67.7 44.3,72.9 39.4,75.5 34.4,72.9 34.4,67.7" fill="rgb(10,10,10)"/><polygon points="50.2,65.1 55.2,67.7 55.2,72.9 50.2,75.5 45.3,72.9 45.3,67.7" fill="rgb(82,70,68)"/><polygon points="61.1,65.1 66.1,67.7 66.1,72.9 61.1,75.5 56.2,72.9 56.2,67.7" fill="rgb(79,66,64)"/><polygon points="72.0,65.1 76.9,67.7 76.9,72.9 72.0,75.5 67.0,72.9 67.0,67.7" fill="rgb(79,66,64)"/><polygon points="82.8,65.1 87.8,67.7 87.8,72.9 82.8,75.5 77.9,72.9 77.9,67.7" fill="rgb(12,12,12)"/><polygon points="93.7,65.1 98.6,67.7 98.6,72.9 93.7,75.5 88.7,72.9 88.7,67.7" fill="rgb(12,12,12)"/><polygon points="104.5,65.1 109.5,67.7 109.5,72.9 104.5,75.5 99.6,72.9 99.6,67.7" fill="rgb(6,6,6)"/><polygon points="115.4,65.1 120.3,67.7 120.3,72.9 115.4,75.5 110.4,72.9 110.4,67.7" fill="rgb(6,6,6)"/><polygon points="126.3,65.1 131.2,67.7 131.2,72.9 126.3,75.5 121.3,72.9 121.3,67.7" fill="rgb(14,14,14)"/><polygon points="137.1,65.1 142.1,67.7 142.1,72.9 137.1,75.5 132.2,72.9 132.2,67.7" fill="rgb(14,14,14)"/><polygon points="148.0,65.1 152.9,67.7 152.9,72.9 148.0,75.5 143.0,72.9 143.0,67.7" fill="rgb(6,6,6)"/><polygon points="-9.5,73.3 -4.5,75.9 -4.5,81.1 -9.5,83.7 -14.4,81.1 -14.4,75.9" fill="rgb(12,12,12)"/><polygon points="1.4,73.3 6.3,75.9 6.3,81.1 1.4,83.7 -3.6,81.1 -3.6,75.9" fill="rgb(17,17,17)"/><polygon points="12.2,73.3 17.2,75.9 17.2,81.1 12.2,83.7 7.3,81.1 7.3,75.9" fill="rgb(14,14,14)"/><polygon points="23.1,73.3 28.0,75.9 28.0,81.1 23.1,83.7 18.1,81.1 18.1,75.9" fill="rgb(10,10,10)"/><polygon points="33.9,73.3 38.9,75.9 38.9,81.1 33.9,83.7 29.0,81.1 29.0,75.9" fill="rgb(14,14,14)"/><polygon points="44.8,73.3 49.8,75.9 49.8,81.1 44.8,83.7 39.9,81.1 39.9,75.9" fill="rgb(10,10,10)"/><polygon points="55.7,73.3 60.6,75.9 60.6,81.1 55.7,83.7 50.7,81.1 50.7,75.9" fill="rgb(14,14,14)"/><polygon points="66.5,73.3 71.5,75.9 71.5,81.1 66.5,83.7 61.6,81.1 61.6,75.9" fill="rgb(72,60,58)"/><polygon points="77.4,73.3 82.3,75.9 82.3,81.1 77.4,83.7 72.4,81.1 72.4,75.9" fill="rgb(8,8,8)"/><polygon points="88.2,73.3 93.2,75.9 93.2,81.1 88.2,83.7 83.3,81.1 83.3,75.9" fill="rgb(6,6,6)"/><polygon points="99.1,73.3 104.1,75.9 104.1,81.1 99.1,83.7 94.2,81.1 94.2,75.9" fill="rgb(76,63,61)"/><polygon points="110.0,73.3 114.9,75.9 114.9,81.1 110.0,83.7 105.0,81.1 105.0,75.9" fill="rgb(10,10,10)"/><polygon points="120.8,73.3 125.8,75.9 125.8,81.1 120.8,83.7 115.9,81.1 115.9,75.9" fill="rgb(6,6,6)"/><polygon points="131.7,73.3 136.6,75.9 136.6,81.1 131.7,83.7 126.7,81.1 126.7,75.9" fill="rgb(6,6,6)"/><polygon points="142.5,73.3 147.5,75.9 147.5,81.1 142.5,83.7 137.6,81.1 137.6,75.9" fill="rgb(6,6,6)"/><polygon points="-4.1,81.4 0.9,84.0 0.9,89.2 -4.1,91.8 -9.0,89.2 -9.0,84.0" fill="rgb(14,14,14)"/><polygon points="6.8,81.4 11.8,84.0 11.8,89.2 6.8,91.8 1.9,89.2 1.9,84.0" fill="rgb(14,14,14)"/><polygon points="17.7,81.4 22.6,84.0 22.6,89.2 17.7,91.8 12.7,89.2 12.7,84.0" fill="rgb(76,63,61)"/><polygon points="28.5,81.4 33.5,84.0 33.5,89.2 28.5,91.8 23.6,89.2 23.6,84.0" fill="rgb(6,6,6)"/><polygon points="39.4,81.4 44.3,84.0 44.3,89.2 39.4,91.8 34.4,89.2 34.4,84.0" fill="rgb(86,73,71)"/><polygon points="50.2,81.4 55.2,84.0 55.2,89.2 50.2,91.8 45.3,89.2 45.3,84.0" fill="rgb(62,50,48)"/><polygon points="61.1,81.4 66.1,84.0 66.1,89.2 61.1,91.8 56.2,89.2 56.2,84.0" fill="rgb(89,76,74)"/><polygon points="72.0,81.4 76.9,84.0 76.9,89.2 72.0,91.8 67.0,89.2 67.0,84.0" fill="rgb(8,8,8)"/><polygon points="82.8,81.4 87.8,84.0 87.8,89.2 82.8,91.8 77.9,89.2 77.9,84.0" fill="rgb(12,12,12)"/><polygon points="93.7,81.4 98.6,84.0 98.6,89.2 93.7,91.8 88.7,89.2 88.7,84.0" fill="rgb(65,53,51)"/><polygon points="104.5,81.4 109.5,84.0 109.5,89.2 104.5,91.8 99.6,89.2 99.6,84.0" fill="rgb(10,10,10)"/><polygon points="115.4,81.4 120.3,84.0 120.3,89.2 115.4,91.8 110.4,89.2 110.4,84.0" fill="rgb(14,14,14)"/><polygon points="126.3,81.4 131.2,84.0 131.2,89.2 126.3,91.8 121.3,89.2 121.3,84.0" fill="rgb(10,10,10)"/><polygon points="137.1,81.4 142.1,84.0 142.1,89.2 137.1,91.8 132.2,89.2 132.2,84.0" fill="rgb(8,8,8)"/><polygon points="148.0,81.4 152.9,84.0 152.9,89.2 148.0,91.8 143.0,89.2 143.0,84.0" fill="rgb(17,17,17)"/><polygon points="-9.5,89.5 -4.5,92.1 -4.5,97.3 -9.5,99.9 -14.4,97.3 -14.4,92.1" fill="rgb(6,6,6)"/><polygon points="1.4,89.5 6.3,92.1 6.3,97.3 1.4,99.9 -3.6,97.3 -3.6,92.1" fill="rgb(10,10,10)"/><polygon points="12.2,89.5 17.2,92.1 17.2,97.3 12.2,99.9 7.3,97.3 7.3,92.1" fill="rgb(10,10,10)"/><polygon points="23.1,89.5 28.0,92.1 28.0,97.3 23.1,99.9 18.1,97.3 18.1,92.1" fill="rgb(82,70,68)"/><polygon points="33.9,89.5 38.9,92.1 38.9,97.3 33.9,99.9 29.0,97.3 29.0,92.1" fill="rgb(10,10,10)"/><polygon points="44.8,89.5 49.8,92.1 49.8,97.3 44.8,99.9 39.9,97.3 39.9,92.1" fill="rgb(79,66,64)"/><polygon points="55.7,89.5 60.6,92.1 60.6,97.3 55.7,99.9 50.7,97.3 50.7,92.1" fill="rgb(8,8,8)"/><polygon points="66.5,89.5 71.5,92.1 71.5,97.3 66.5,99.9 61.6,97.3 61.6,92.1" fill="rgb(12,12,12)"/><polygon points="77.4,89.5 82.3,92.1 82.3,97.3 77.4,99.9 72.4,97.3 72.4,92.1" fill="rgb(72,60,58)"/><polygon points="88.2,89.5 93.2,92.1 93.2,97.3 88.2,99.9 83.3,97.3 83.3,92.1" fill="rgb(12,12,12)"/><polygon points="99.1,89.5 104.1,92.1 104.1,97.3 99.1,99.9 94.2,97.3 94.2,92.1" fill="rgb(86,73,71)"/><polygon points="110.0,89.5 114.9,92.1 114.9,97.3 110.0,99.9 105.0,97.3 105.0,92.1" fill="rgb(65,53,51)"/><polygon points="120.8,89.5 125.8,92.1 125.8,97.3 120.8,99.9 115.9,97.3 115.9,92.1" fill="rgb(12,12,12)"/><polygon points="131.7,89.5 136.6,92.1 136.6,97.3 131.7,99.9 126.7,97.3 126.7,92.1" fill="rgb(14,14,14)"/><polygon points="142.5,89.5 147.5,92.1 147.5,97.3 142.5,99.9 137.6,97.3 137.6,92.1" fill="rgb(12,12,12)"/><polygon points="-4.1,97.7 0.9,100.3 0.9,105.5 -4.1,108.1 -9.0,105.5 -9.0,100.3" fill="rgb(17,17,17)"/><polygon points="6.8,97.7 11.8,100.3 11.8,105.5 6.8,108.1 1.9,105.5 1.9,100.3" fill="rgb(14,14,14)"/><polygon points="17.7,97.7 22.6,100.3 22.6,105.5 17.7,108.1 12.7,105.5 12.7,100.3" fill="rgb(17,17,17)"/><polygon points="28.5,97.7 33.5,100.3 33.5,105.5 28.5,108.1 23.6,105.5 23.6,100.3" fill="rgb(14,14,14)"/><polygon points="39.4,97.7 44.3,100.3 44.3,105.5 39.4,108.1 34.4,105.5 34.4,100.3" fill="rgb(62,50,48)"/><polygon points="50.2,97.7 55.2,100.3 55.2,105.5 50.2,108.1 45.3,105.5 45.3,100.3" fill="rgb(6,6,6)"/><polygon points="61.1,97.7 66.1,100.3 66.1,105.5 61.1,108.1 56.2,105.5 56.2,100.3" fill="rgb(14,14,14)"/><polygon points="72.0,97.7 76.9,100.3 76.9,105.5 72.0,108.1 67.0,105.5 67.0,100.3" fill="rgb(14,14,14)"/><polygon points="82.8,97.7 87.8,100.3 87.8,105.5 82.8,108.1 77.9,105.5 77.9,100.3" fill="rgb(10,10,10)"/><polygon points="93.7,97.7 98.6,100.3 98.6,105.5 93.7,108.1 88.7,105.5 88.7,100.3" fill="rgb(12,12,12)"/><polygon points="104.5,97.7 109.5,100.3 109.5,105.5 104.5,108.1 99.6,105.5 99.6,100.3" fill="rgb(17,17,17)"/><polygon points="115.4,97.7 120.3,100.3 120.3,105.5 115.4,108.1 110.4,105.5 110.4,100.3" fill="rgb(17,17,17)"/><polygon points="126.3,97.7 131.2,100.3 131.2,105.5 126.3,108.1 121.3,105.5 121.3,100.3" fill="rgb(17,17,17)"/><polygon points="137.1,97.7 142.1,100.3 142.1,105.5 137.1,108.1 132.2,105.5 132.2,100.3" fill="rgb(8,8,8)"/><polygon points="148.0,97.7 152.9,100.3 152.9,105.5 148.0,108.1 143.0,105.5 143.0,100.3" fill="rgb(10,10,10)"/><polygon points="-9.5,105.8 -4.5,108.4 -4.5,113.6 -9.5,116.2 -14.4,113.6 -14.4,108.4" fill="rgb(12,12,12)"/><polygon points="1.4,105.8 6.3,108.4 6.3,113.6 1.4,116.2 -3.6,113.6 -3.6,108.4" fill="rgb(79,66,64)"/><polygon points="12.2,105.8 17.2,108.4 17.2,113.6 12.2,116.2 7.3,113.6 7.3,108.4" fill="rgb(10,10,10)"/><polygon points="23.1,105.8 28.0,108.4 28.0,113.6 23.1,116.2 18.1,113.6 18.1,108.4" fill="rgb(14,14,14)"/><polygon points="33.9,105.8 38.9,108.4 38.9,113.6 33.9,116.2 29.0,113.6 29.0,108.4" fill="rgb(82,70,68)"/><polygon points="44.8,105.8 49.8,108.4 49.8,113.6 44.8,116.2 39.9,113.6 39.9,108.4" fill="rgb(10,10,10)"/><polygon points="55.7,105.8 60.6,108.4 60.6,113.6 55.7,116.2 50.7,113.6 50.7,108.4" fill="rgb(14,14,14)"/><polygon points="66.5,105.8 71.5,108.4 71.5,113.6 66.5,116.2 61.6,113.6 61.6,108.4" fill="rgb(10,10,10)"/><polygon points="77.4,105.8 82.3,108.4 82.3,113.6 77.4,116.2 72.4,113.6 72.4,108.4" fill="rgb(6,6,6)"/><polygon points="88.2,105.8 93.2,108.4 93.2,113.6 88.2,116.2 83.3,113.6 83.3,108.4" fill="rgb(12,12,12)"/><polygon points="99.1,105.8 104.1,108.4 104.1,113.6 99.1,116.2 94.2,113.6 94.2,108.4" fill="rgb(14,14,14)"/><polygon points="110.0,105.8 114.9,108.4 114.9,113.6 110.0,116.2 105.0,113.6 105.0,108.4" fill="rgb(10,10,10)"/><polygon points="120.8,105.8 125.8,108.4 125.8,113.6 120.8,116.2 115.9,113.6 115.9,108.4" fill="rgb(79,66,64)"/><polygon points="131.7,105.8 136.6,108.4 136.6,113.6 131.7,116.2 126.7,113.6 126.7,108.4" fill="rgb(79,66,64)"/><polygon points="142.5,105.8 147.5,108.4 147.5,113.6 142.5,116.2 137.6,113.6 137.6,108.4" fill="rgb(6,6,6)"/><polygon points="-4.1,113.9 0.9,116.5 0.9,121.7 -4.1,124.3 -9.0,121.7 -9.0,116.5" fill="rgb(12,12,12)"/><polygon points="6.8,113.9 11.8,116.5 11.8,121.7 6.8,124.3 1.9,121.7 1.9,116.5" fill="rgb(14,14,14)"/><polygon points="17.7,113.9 22.6,116.5 22.6,121.7 17.7,124.3 12.7,121.7 12.7,116.5" fill="rgb(14,14,14)"/><polygon points="28.5,113.9 33.5,116.5 33.5,121.7 28.5,124.3 23.6,121.7 23.6,116.5" fill="rgb(76,63,61)"/><polygon points="39.4,113.9 44.3,116.5 44.3,121.7 39.4,124.3 34.4,121.7 34.4,116.5" fill="rgb(17,17,17)"/><polygon points="50.2,113.9 55.2,116.5 55.2,121.7 50.2,124.3 45.3,121.7 45.3,116.5" fill="rgb(8,8,8)"/><polygon points="61.1,113.9 66.1,116.5 66.1,121.7 61.1,124.3 56.2,121.7 56.2,116.5" fill="rgb(6,6,6)"/><polygon points="72.0,113.9 76.9,116.5 76.9,121.7 72.0,124.3 67.0,121.7 67.0,116.5" fill="rgb(79,66,64)"/><polygon points="82.8,113.9 87.8,116.5 87.8,121.7 82.8,124.3 77.9,121.7 77.9,116.5" fill="rgb(17,17,17)"/><polygon points="93.7,113.9 98.6,116.5 98.6,121.7 93.7,124.3 88.7,121.7 88.7,116.5" fill="rgb(65,53,51)"/><polygon points="104.5,113.9 109.5,116.5 109.5,121.7 104.5,124.3 99.6,121.7 99.6,116.5" fill="rgb(17,17,17)"/><polygon points="115.4,113.9 120.3,116.5 120.3,121.7 115.4,124.3 110.4,121.7 110.4,116.5" fill="rgb(65,53,51)"/><polygon points="126.3,113.9 131.2,116.5 131.2,121.7 126.3,124.3 121.3,121.7 121.3,116.5" fill="rgb(72,60,58)"/><polygon points="137.1,113.9 142.1,116.5 142.1,121.7 137.1,124.3 132.2,121.7 132.2,116.5" fill="rgb(10,10,10)"/><polygon points="148.0,113.9 152.9,116.5 152.9,121.7 148.0,124.3 143.0,121.7 143.0,116.5" fill="rgb(12,12,12)"/><polygon points="-9.5,122.0 -4.5,124.7 -4.5,129.8 -9.5,132.4 -14.4,129.8 -14.4,124.7" fill="rgb(10,10,10)"/><polygon points="1.4,122.0 6.3,124.7 6.3,129.8 1.4,132.4 -3.6,129.8 -3.6,124.7" fill="rgb(17,17,17)"/><polygon points="12.2,122.0 17.2,124.7 17.2,129.8 12.2,132.4 7.3,129.8 7.3,124.7" fill="rgb(10,10,10)"/><polygon points="23.1,122.0 28.0,124.7 28.0,129.8 23.1,132.4 18.1,129.8 18.1,124.7" fill="rgb(79,66,64)"/><polygon points="33.9,122.0 38.9,124.7 38.9,129.8 33.9,132.4 29.0,129.8 29.0,124.7" fill="rgb(14,14,14)"/><polygon points="44.8,122.0 49.8,124.7 49.8,129.8 44.8,132.4 39.9,129.8 39.9,124.7" fill="rgb(76,63,61)"/><polygon points="55.7,122.0 60.6,124.7 60.6,129.8 55.7,132.4 50.7,129.8 50.7,124.7" fill="rgb(17,17,17)"/><polygon points="66.5,122.0 71.5,124.7 71.5,129.8 66.5,132.4 61.6,129.8 61.6,124.7" fill="rgb(10,10,10)"/><polygon points="77.4,122.0 82.3,124.7 82.3,129.8 77.4,132.4 72.4,129.8 72.4,124.7" fill="rgb(17,17,17)"/><polygon points="88.2,122.0 93.2,124.7 93.2,129.8 88.2,132.4 83.3,129.8 83.3,124.7" fill="rgb(12,12,12)"/><polygon points="99.1,122.0 104.1,124.7 104.1,129.8 99.1,132.4 94.2,129.8 94.2,124.7" fill="rgb(6,6,6)"/><polygon points="110.0,122.0 114.9,124.7 114.9,129.8 110.0,132.4 105.0,129.8 105.0,124.7" fill="rgb(79,66,64)"/><polygon points="120.8,122.0 125.8,124.7 125.8,129.8 120.8,132.4 115.9,129.8 115.9,124.7" fill="rgb(14,14,14)"/><polygon points="131.7,122.0 136.6,124.7 136.6,129.8 131.7,132.4 126.7,129.8 126.7,124.7" fill="rgb(6,6,6)"/><polygon points="142.5,122.0 147.5,124.7 147.5,129.8 142.5,132.4 137.6,129.8 137.6,124.7" fill="rgb(17,17,17)"/><polygon points="-4.1,130.2 0.9,132.8 0.9,138.0 -4.1,140.6 -9.0,138.0 -9.0,132.8" fill="rgb(6,6,6)"/><polygon points="6.8,130.2 11.8,132.8 11.8,138.0 6.8,140.6 1.9,138.0 1.9,132.8" fill="rgb(10,10,10)"/><polygon points="17.7,130.2 22.6,132.8 22.6,138.0 17.7,140.6 12.7,138.0 12.7,132.8" fill="rgb(10,10,10)"/><polygon points="28.5,130.2 33.5,132.8 33.5,138.0 28.5,140.6 23.6,138.0 23.6,132.8" fill="rgb(17,17,17)"/><polygon points="39.4,130.2 44.3,132.8 44.3,138.0 39.4,140.6 34.4,138.0 34.4,132.8" fill="rgb(12,12,12)"/><polygon points="50.2,130.2 55.2,132.8 55.2,138.0 50.2,140.6 45.3,138.0 45.3,132.8" fill="rgb(10,10,10)"/><polygon points="61.1,130.2 66.1,132.8 66.1,138.0 61.1,140.6 56.2,138.0 56.2,132.8" fill="rgb(14,14,14)"/><polygon points="72.0,130.2 76.9,132.8 76.9,138.0 72.0,140.6 67.0,138.0 67.0,132.8" fill="rgb(14,14,14)"/><polygon points="82.8,130.2 87.8,132.8 87.8,138.0 82.8,140.6 77.9,138.0 77.9,132.8" fill="rgb(10,10,10)"/><polygon points="93.7,130.2 98.6,132.8 98.6,138.0 93.7,140.6 88.7,138.0 88.7,132.8" fill="rgb(8,8,8)"/><polygon points="104.5,130.2 109.5,132.8 109.5,138.0 104.5,140.6 99.6,138.0 99.6,132.8" fill="rgb(10,10,10)"/><polygon points="115.4,130.2 120.3,132.8 120.3,138.0 115.4,140.6 110.4,138.0 110.4,132.8" fill="rgb(8,8,8)"/><polygon points="126.3,130.2 131.2,132.8 131.2,138.0 126.3,140.6 121.3,138.0 121.3,132.8" fill="rgb(10,10,10)"/><polygon points="137.1,130.2 142.1,132.8 142.1,138.0 137.1,140.6 132.2,138.0 132.2,132.8" fill="rgb(10,10,10)"/><polygon points="148.0,130.2 152.9,132.8 152.9,138.0 148.0,140.6 143.0,138.0 143.0,132.8" fill="rgb(14,14,14)"/><rect x="0.5" y="0.5" width="132" height="131" fill="none" stroke="#000" stroke-width="1"/></svg></svg><div style="position:absolute;left:582px;top:37px;width:34px;height:21px;border:1px solid #a6d2f7;border-radius:3px;background:#c6e0f6"></div><div style="position:absolute;left:606px;top:37px;width:1px;height:23px;background:#a6d2f7"></div><svg style="position:absolute;left:584px;top:39px" width="22" height="21"><path d="M11 1.6 L2 10.8 L11 10.8 Z" fill="#e0900c"/><path d="M11 1.6 L20 10.8 L11 10.8 Z" fill="#f7dc95"/><path d="M2 10.8 L11 1.6 L20 10.8" fill="none" stroke="#c77a08" stroke-width="0.8"/><rect x="2" y="10.8" width="9" height="9" fill="#1d5d86"/><rect x="4.5" y="12.5" width="3" height="7" fill="#fff"/><rect x="11" y="11.2" width="8.6" height="8.4" fill="#fff" stroke="#7a7a7a" stroke-width="0.9"/><path d="M12.8 15.6 L14.8 17.8 L18.2 12.8" fill="none" stroke="#3434c0" stroke-width="1.2"/></svg><svg style="position:absolute;left:608px;top:45px" width="8" height="6"><path d="M0.8 1 L7.2 1 L4 4.8 Z" fill="#000"/></svg><svg style="position:absolute;left:625px;top:38px" width="21" height="21"><rect x="0.5" y="0.5" width="20" height="20" rx="1.5" fill="#fff"/><rect x="1.3" y="1.3" width="18.4" height="18.4" rx="1.2" fill="#8e8e8e"/><path d="M2.5 8.5 Q10.5 15 18.5 8.5" fill="none" stroke="#c8c8c8" stroke-width="1.3"/><path d="M3 4 Q6 2.5 9 5 M18 4 Q15 2.5 12 5" fill="none" stroke="#bdbdbd" stroke-width="1.2"/><path d="M7.5 6 L13.5 6 L10.5 9.5 Z" fill="#6e6e6e"/></svg><div style="position:absolute;left:654px;top:37px;width:23px;height:21px;border:1px solid #a6d2f7;border-radius:3px;background:#cce4f7"></div><svg style="position:absolute;left:656px;top:38px" width="21" height="21"><path d="M10 3 Q7 6 6.5 11 Q6 15 4.5 18" fill="none" stroke="#000" stroke-width="1.1"/><path d="M7.5 8 Q11 6.5 15.5 7.5" fill="none" stroke="#000" stroke-width="1.1"/><path d="M7 10 Q10 11 11 14" fill="none" stroke="#000" stroke-width="1.1"/><path d="M8 2.2 L11.5 2.2 L10 4.5 Z M14.5 5.8 L17.5 7.6 L14.5 9.2 Z M3 16.5 L6.2 16.8 L4.3 20 Z M9.5 12.5 L11.8 13 L11 15.5 Z" fill="#000"/><rect x="11.2" y="11.5" width="8.2" height="8.6" fill="#fff" stroke="#7a7a7a" stroke-width="0.9"/><path d="M12.8 15.8 L14.6 17.8 L17.8 13.2" fill="none" stroke="#3434c0" stroke-width="1.2"/></svg><div style="position:absolute;left:684px;top:37px;width:23px;height:21px;border:1px solid #a6d2f7;border-radius:3px;background:#cce4f7"></div><svg style="position:absolute;left:686px;top:38px" width="21" height="21"><path d="M2.6 9.2 L8.8 3.3 L10.6 3.3 L10.6 9.2 Z" fill="#fff" stroke="#1b6f8f" stroke-width="0.9"/><path d="M10.4 3.2 L13.2 3.2 L19.6 9.6 L10.4 9.6 Z" fill="#000"/><rect x="2.8" y="9.4" width="7.8" height="10.4" fill="#fbe6a6" stroke="#e09a2a" stroke-width="0.9"/><rect x="4.8" y="11.8" width="3" height="2.6" fill="#fff" stroke="#e09a2a" stroke-width="0.7"/><rect x="10.3" y="2" width="1.3" height="18.6" fill="#7c7c7c"/><rect x="11.6" y="10" width="7.9" height="10.2" fill="#fff" stroke="#8a8a8a" stroke-width="0.9"/><path d="M13.2 15.6 L15 17.8 L18.3 12.8" fill="none" stroke="#3636b8" stroke-width="1.2"/></svg><svg style="position:absolute;left:716px;top:38px" width="21" height="21"><path d="M1.5 6.7 L5.5 2.2 L10.1 2.2 L14.5 6.7 Z" fill="#0b5a87"/><rect x="3.7" y="6.7" width="9" height="6.4" fill="#fff" stroke="#111" stroke-width="1.2"/><rect x="5.3" y="8.2" width="2.4" height="2.6" fill="#111"/><rect x="8.6" y="8.2" width="2.6" height="4.3" fill="#111"/><rect x="9.5" y="9.5" width="0.8" height="3" fill="#fff"/><path d="M7.3 14.9 L11.5 18.8 L19 8.6" fill="none" stroke="#2ea043" stroke-width="2.1"/></svg><svg style="position:absolute;left:746px;top:38px" width="21" height="21"><path d="M2.3 6.7 L7.4 2.1 L18.9 2.1 L13.8 6.7 Z" fill="#fff" stroke="#14668f" stroke-width="1"/><path d="M13.8 6.7 L18.9 2.1 L18.9 13.8 L13.8 18.5 Z" fill="#fff" stroke="#14668f" stroke-width="1"/><rect x="2" y="6.7" width="11.8" height="11.8" fill="#0b5a87"/></svg><svg style="position:absolute;left:770px;top:45px" width="9" height="6"><path d="M1 1 L8 1 L4.5 4.8 Z" fill="#000"/></svg><svg style="position:absolute;left:787px;top:38px" width="21" height="21"><path d="M10.5 1.5 L19.7 3.3 L19.7 16 L10.5 19.2 L1.9 16 L1.9 3.3 Z" fill="#f8e7a8"/><path d="M1.9 16 L10.5 13.5 L19.7 16 L10.5 19.2 Z" fill="#e8787a"/><path d="M5 15.5 L14 18 M8 14.5 L17 17 M4.5 16.8 L14.5 14.3 M7.5 17.9 L17.5 15.2" stroke="#f6c8c8" stroke-width="0.6"/><path d="M10.5 1.5 L19.7 3.3 L19.7 16 L10.5 19.2 L1.9 16 L1.9 3.3 Z" fill="none" stroke="#000" stroke-width="1.3"/><path d="M1.9 3.3 L10.5 5.6 L19.7 3.3 M10.5 5.6 L10.5 13.5 M1.9 16 L10.5 13.5 L19.7 16" fill="none" stroke="#000" stroke-width="1"/></svg><svg style="position:absolute;left:811px;top:45px" width="9" height="6"><path d="M1 1 L8 1 L4.5 4.8 Z" fill="#000"/></svg><div style="position:absolute;left:564px;top:66px;width:275px;height:640px;border:1px solid #858b94;overflow:hidden"><svg width="275" height="640" viewBox="565 67 275 640" style="display:block"><defs><linearGradient id="lw" x1="0" y1="0" x2="0" y2="1"><stop offset="0" stop-color="#c6c0b1"/><stop offset="1" stop-color="#bdb6a6"/></linearGradient><linearGradient id="rw" x1="1" y1="0" x2="0" y2="1"><stop offset="0" stop-color="#d4cfc2"/><stop offset="0.5" stop-color="#cbc5b7"/><stop offset="1" stop-color="#bfb8a8"/></linearGradient><linearGradient id="lf" gradientUnits="userSpaceOnUse" x1="620" y1="397" x2="596" y2="640"><stop offset="0" stop-color="#6a665f"/><stop offset="0.3" stop-color="#5c5952"/><stop offset="0.345" stop-color="#4b3e31"/><stop offset="0.6" stop-color="#433629"/><stop offset="1" stop-color="#392d21"/></linearGradient><linearGradient id="tf" x1="0" y1="0" x2="0" y2="1"><stop offset="0" stop-color="#5d5a54"/><stop offset="1" stop-color="#504d48"/></linearGradient><linearGradient id="rg" gradientUnits="userSpaceOnUse" x1="0" y1="405" x2="0" y2="640"><stop offset="0" stop-color="#4c4842"/><stop offset="1" stop-color="#2e2a26"/></linearGradient><linearGradient id="flv" gradientUnits="userSpaceOnUse" x1="0" y1="450" x2="0" y2="701"><stop offset="0" stop-color="#6e5438"/><stop offset="0.45" stop-color="#7a5f42"/><stop offset="1" stop-color="#806445"/></linearGradient><linearGradient id="fl" x1="0" y1="0" x2="1" y2="1"><stop offset="0" stop-color="#94754c"/><stop offset="0.5" stop-color="#93744b"/><stop offset="1" stop-color="#8c6e47"/></linearGradient><filter id="nz" x="0" y="0" width="1" height="1"><feTurbulence type="fractalNoise" baseFrequency="0.12" numOctaves="3" seed="4"/><feColorMatrix values="1.1 0 0 0 -0.12  1.1 0 0 0 -0.13  1.1 0 0 0 -0.15  0 0 0 0 1"/><feComposite in2="SourceGraphic" operator="in"/></filter></defs><rect x="565" y="67" width="276" height="640" fill="#c8c2b3"/><polygon points="565.0,67.0 624.0,67.0 640.0,452.0 565.0,478.0" fill="url(#lw)"/><polygon points="624.0,67.0 841.0,67.0 841.0,478.0 640.0,452.0" fill="url(#rw)"/><polygon points="565.0,478.0 640.0,452.0 841.0,478.0 841.0,710.0 565.0,710.0" fill="url(#flv)"/><polygon points="870.0,430.0 275.1,508.0 301.0,620.3" fill="#7b6043" opacity="0.55"/><path d="M792.5 449.8 L288.7 578.6" stroke="#a8875c" stroke-width="1.3" opacity="0.22"/><path d="M793.0 451.5 L292.2 591.6" stroke="#a8875c" stroke-width="0.9" opacity="0.08"/><path d="M793.9 454.5 L298.9 614.1" stroke="#a8875c" stroke-width="0.6" opacity="0.23"/><path d="M791.9 447.5 L284.5 561.3" stroke="#5a4028" stroke-width="1.0" opacity="0.17"/><path d="M790.7 440.6 L275.3 509.5" stroke="#5a4028" stroke-width="1.3" opacity="0.13"/><path d="M793.1 451.9 L293.0 594.5" stroke="#5a4028" stroke-width="0.6" opacity="0.22"/><path d="M792.5 449.7 L288.5 578.0" stroke="#5a4028" stroke-width="1.3" opacity="0.08"/><polygon points="870.0,430.0 301.0,620.3 323.4,677.3" fill="#72583c" opacity="0.55"/><path d="M794.7 457.0 L305.2 632.4" stroke="#5a4028" stroke-width="1.3" opacity="0.25"/><path d="M794.9 457.6 L306.8 637.0" stroke="#a8875c" stroke-width="1.1" opacity="0.17"/><path d="M794.7 457.0 L305.1 632.2" stroke="#a8875c" stroke-width="1.4" opacity="0.20"/><path d="M796.8 462.2 L320.7 671.4" stroke="#5a4028" stroke-width="0.6" opacity="0.14"/><path d="M794.5 456.5 L303.9 628.7" stroke="#5a4028" stroke-width="1.0" opacity="0.13"/><path d="M794.1 455.4 L301.0 620.5" stroke="#a8875c" stroke-width="0.8" opacity="0.14"/><path d="M796.5 461.6 L318.9 667.2" stroke="#5a4028" stroke-width="0.9" opacity="0.13"/><polygon points="870.0,430.0 323.4,677.3 350.5,730.3" fill="#7f6445" opacity="0.55"/><path d="M799.6 468.0 L342.0 714.9" stroke="#5a4028" stroke-width="0.5" opacity="0.25"/><path d="M799.8 468.3 L343.2 717.3" stroke="#a8875c" stroke-width="1.2" opacity="0.08"/><path d="M798.4 465.6 L332.7 697.0" stroke="#5a4028" stroke-width="0.5" opacity="0.08"/><path d="M797.7 464.3 L327.9 687.1" stroke="#a8875c" stroke-width="1.2" opacity="0.11"/><path d="M800.5 469.6 L348.5 726.6" stroke="#a8875c" stroke-width="0.8" opacity="0.14"/><path d="M798.9 466.7 L337.0 705.4" stroke="#a8875c" stroke-width="1.2" opacity="0.10"/><path d="M799.9 468.6 L344.6 719.8" stroke="#a8875c" stroke-width="1.4" opacity="0.09"/><polygon points="870.0,430.0 350.5,730.3 378.5,774.1" fill="#6f553a" opacity="0.55"/><path d="M801.1 470.6 L352.9 734.4" stroke="#5a4028" stroke-width="1.3" opacity="0.18"/><path d="M801.9 472.1 L359.6 745.4" stroke="#a8875c" stroke-width="0.8" opacity="0.17"/><path d="M801.9 471.9 L359.0 744.4" stroke="#5a4028" stroke-width="0.6" opacity="0.09"/><path d="M803.3 474.1 L369.4 760.7" stroke="#a8875c" stroke-width="0.5" opacity="0.11"/><path d="M804.4 475.8 L378.1 773.5" stroke="#5a4028" stroke-width="0.7" opacity="0.15"/><path d="M802.9 473.5 L366.7 756.6" stroke="#a8875c" stroke-width="0.9" opacity="0.16"/><path d="M800.9 470.4 L352.0 732.8" stroke="#a8875c" stroke-width="0.9" opacity="0.09"/><polygon points="870.0,430.0 378.5,774.1 416.5,822.9" fill="#786044" opacity="0.55"/><path d="M808.7 481.4 L410.0 815.3" stroke="#5a4028" stroke-width="1.4" opacity="0.20"/><path d="M807.6 480.0 L401.9 805.3" stroke="#a8875c" stroke-width="0.9" opacity="0.10"/><path d="M805.2 476.9 L383.8 781.6" stroke="#a8875c" stroke-width="0.9" opacity="0.13"/><path d="M809.5 482.4 L416.5 822.9" stroke="#a8875c" stroke-width="0.9" opacity="0.25"/><path d="M806.9 479.1 L396.4 798.4" stroke="#a8875c" stroke-width="0.8" opacity="0.16"/><path d="M806.4 478.6 L393.2 794.3" stroke="#5a4028" stroke-width="1.4" opacity="0.14"/><path d="M809.3 482.1 L414.9 821.0" stroke="#a8875c" stroke-width="0.8" opacity="0.16"/><polygon points="870.0,430.0 416.5,822.9 449.1,857.6" fill="#7c6142" opacity="0.55"/><path d="M809.9 482.8 L419.3 826.1" stroke="#5a4028" stroke-width="1.3" opacity="0.21"/><path d="M811.1 484.1 L428.0 835.7" stroke="#a8875c" stroke-width="1.1" opacity="0.21"/><path d="M812.4 485.5 L437.8 846.2" stroke="#a8875c" stroke-width="1.1" opacity="0.14"/><path d="M810.7 483.7 L425.4 832.9" stroke="#5a4028" stroke-width="1.1" opacity="0.21"/><path d="M810.8 483.8 L425.8 833.3" stroke="#a8875c" stroke-width="1.0" opacity="0.19"/><path d="M809.6 482.4 L416.9 823.3" stroke="#5a4028" stroke-width="1.1" opacity="0.12"/><path d="M811.5 484.6 L431.2 839.3" stroke="#a8875c" stroke-width="1.2" opacity="0.19"/><polygon points="870.0,430.0 449.1,857.6 491.3,895.4" fill="#6c5238" opacity="0.55"/><path d="M815.8 488.8 L463.4 871.2" stroke="#a8875c" stroke-width="1.2" opacity="0.21"/><path d="M815.8 488.8 L463.4 871.3" stroke="#a8875c" stroke-width="1.1" opacity="0.23"/><path d="M819.4 491.9 L490.3 894.5" stroke="#a8875c" stroke-width="1.0" opacity="0.17"/><path d="M814.8 487.9 L455.8 864.1" stroke="#a8875c" stroke-width="0.9" opacity="0.24"/><path d="M817.7 490.6 L477.9 884.2" stroke="#a8875c" stroke-width="0.7" opacity="0.20"/><path d="M818.2 491.0 L481.7 887.4" stroke="#5a4028" stroke-width="0.9" opacity="0.19"/><path d="M817.3 490.2 L475.0 881.6" stroke="#a8875c" stroke-width="1.1" opacity="0.19"/><polygon points="870.0,430.0 491.3,895.4 566.9,947.8" fill="#796041" opacity="0.55"/><path d="M819.8 492.3 L493.3 897.0" stroke="#5a4028" stroke-width="1.1" opacity="0.15"/><path d="M821.6 493.7 L507.2 907.9" stroke="#a8875c" stroke-width="0.5" opacity="0.19"/><path d="M824.1 495.5 L526.0 921.6" stroke="#5a4028" stroke-width="0.6" opacity="0.09"/><path d="M822.6 494.4 L514.4 913.3" stroke="#5a4028" stroke-width="0.5" opacity="0.11"/><path d="M824.1 495.5 L525.5 921.2" stroke="#5a4028" stroke-width="1.0" opacity="0.18"/><path d="M821.8 493.9 L508.6 908.9" stroke="#a8875c" stroke-width="0.9" opacity="0.08"/><path d="M822.2 494.2 L511.6 911.2" stroke="#5a4028" stroke-width="1.2" opacity="0.10"/><polygon points="870.0,430.0 566.9,947.8 630.5,980.1" fill="#735a3e" opacity="0.55"/><path d="M832.7 500.8 L590.2 960.8" stroke="#5a4028" stroke-width="0.6" opacity="0.18"/><path d="M834.1 501.5 L601.1 966.4" stroke="#5a4028" stroke-width="1.4" opacity="0.18"/><path d="M836.5 502.6 L618.7 974.8" stroke="#5a4028" stroke-width="1.1" opacity="0.22"/><path d="M832.7 500.8 L590.0 960.6" stroke="#5a4028" stroke-width="1.0" opacity="0.18"/><path d="M837.7 503.2 L627.7 978.9" stroke="#a8875c" stroke-width="0.8" opacity="0.18"/><path d="M837.1 502.9 L623.5 977.0" stroke="#5a4028" stroke-width="1.0" opacity="0.10"/><path d="M834.7 501.8 L605.6 968.6" stroke="#5a4028" stroke-width="1.3" opacity="0.19"/><polygon points="870.0,430.0 630.5,980.1 713.9,1009.3" fill="#7d6243" opacity="0.55"/><path d="M842.2 505.0 L661.3 992.5" stroke="#5a4028" stroke-width="0.8" opacity="0.12"/><path d="M848.9 507.2 L711.6 1008.7" stroke="#5a4028" stroke-width="1.3" opacity="0.24"/><path d="M844.6 505.9 L679.7 999.0" stroke="#5a4028" stroke-width="0.9" opacity="0.25"/><path d="M842.6 505.2 L664.6 993.8" stroke="#5a4028" stroke-width="0.9" opacity="0.25"/><path d="M841.2 504.6 L653.9 989.7" stroke="#5a4028" stroke-width="1.1" opacity="0.10"/><path d="M842.9 505.3 L666.9 994.6" stroke="#5a4028" stroke-width="1.2" opacity="0.21"/><path d="M838.2 503.4 L631.5 980.6" stroke="#5a4028" stroke-width="1.3" opacity="0.13"/><polygon points="870.0,430.0 713.9,1009.3 804.0,1026.4" fill="#71573d" opacity="0.55"/><path d="M858.6 509.2 L784.1 1023.8" stroke="#5a4028" stroke-width="0.6" opacity="0.13"/><path d="M861.1 509.5 L803.0 1026.2" stroke="#5a4028" stroke-width="0.9" opacity="0.18"/><path d="M856.9 508.9 L771.7 1021.9" stroke="#a8875c" stroke-width="0.6" opacity="0.21"/><path d="M858.3 509.1 L782.2 1023.5" stroke="#5a4028" stroke-width="0.8" opacity="0.17"/><path d="M852.7 508.1 L740.4 1015.8" stroke="#5a4028" stroke-width="0.8" opacity="0.16"/><path d="M858.1 509.1 L780.8 1023.3" stroke="#5a4028" stroke-width="0.7" opacity="0.09"/><path d="M854.6 508.5 L754.6 1018.8" stroke="#a8875c" stroke-width="1.0" opacity="0.23"/><polygon points="616.0,645.6 652.5,616.0 668.0,636.0 637.7,657.0" fill="#6a4a28" opacity="0.45"/><path d="M616 645.6 L652.5 616 M637.7 657 L668 636" stroke="#4e3822" stroke-width="1" opacity="0.5"/><polygon points="784.2,618.9 816.3,630.7 797.0,701.0 752.0,701.0" fill="#6e5438" opacity="0.35"/><path d="M870.0 430.0 L301.0 620.3" stroke="#4e3822" stroke-width="1" opacity="0.6"/><path d="M870.0 430.0 L323.4 677.3" stroke="#4e3822" stroke-width="1" opacity="0.6"/><path d="M870.0 430.0 L350.5 730.3" stroke="#4e3822" stroke-width="1" opacity="0.6"/><path d="M870.0 430.0 L378.5 774.1" stroke="#4e3822" stroke-width="1" opacity="0.6"/><path d="M870.0 430.0 L416.5 822.9" stroke="#4e3822" stroke-width="1" opacity="0.6"/><path d="M870.0 430.0 L449.1 857.6" stroke="#4e3822" stroke-width="1" opacity="0.6"/><path d="M870.0 430.0 L491.3 895.4" stroke="#4e3822" stroke-width="1" opacity="0.6"/><path d="M870.0 430.0 L566.9 947.8" stroke="#4e3822" stroke-width="1" opacity="0.6"/><path d="M870.0 430.0 L630.5 980.1" stroke="#4e3822" stroke-width="1" opacity="0.6"/><path d="M870.0 430.0 L713.9 1009.3" stroke="#4e3822" stroke-width="1" opacity="0.6"/><path d="M614.3 574.1 L623.4 579.1" stroke="#4e3822" stroke-width="1" opacity="0.6"/><path d="M616.3 646.5 L636.4 656.6" stroke="#4e3822" stroke-width="1" opacity="0.6"/><path d="M565 666.6 L583.1 676.7" stroke="#4e3822" stroke-width="1" opacity="0.6"/><path d="M717.8 617.8 L747.8 628.5" stroke="#4e3822" stroke-width="1" opacity="0.6"/><path d="M784.2 618.9 L816.3 630.7" stroke="#4e3822" stroke-width="1" opacity="0.6"/><path d="M590 520 L602 526" stroke="#4e3822" stroke-width="1" opacity="0.6"/><polygon points="565.0,67.0 624.0,67.0 640.0,452.0 565.0,478.0" fill="url(#lw)"/><polygon points="624.0,67.0 841.0,67.0 841.0,478.0 640.0,452.0" fill="url(#rw)"/><path d="M623.5 67 L639.5 452" stroke="#aaa290" stroke-width="1.1" opacity="0.4"/><polygon points="587.0,397.6 723.0,389.0 839.0,405.5 655.0,426.0" fill="url(#tf)" stroke="#6a6761" stroke-width="0.5"/><polygon points="587.0,397.6 723.0,389.0 839.0,405.5 655.0,426.0" fill="#000" filter="url(#nz)" opacity="0.16"/><polygon points="587.0,397.6 655.0,426.0 666.0,639.0 604.0,542.0" fill="url(#lf)" stroke="#5a544c" stroke-width="0.4"/><polygon points="587.0,397.6 589.4,399.9 589.9,404.3 587.9,405.4 587.7,403.3 587.2,398.9" fill="#fff" opacity="0.10"/><polygon points="592.4,399.8 595.0,402.3 595.5,406.9 593.3,408.0 590.7,404.7 590.2,400.2" fill="#fff" opacity="0.10"/><polygon points="598.4,402.3 601.2,405.0 601.7,409.9 599.3,411.0 596.4,407.4 595.9,402.7" fill="#fff" opacity="0.10"/><polygon points="605.0,405.1 608.2,408.0 608.7,413.2 606.0,414.2 602.8,410.4 602.3,405.4" fill="#fff" opacity="0.05"/><polygon points="612.5,408.3 616.1,411.4 616.6,416.9 613.4,417.9 609.9,413.7 609.4,408.5" fill="#fff" opacity="0.05"/><polygon points="621.0,411.8 625.1,415.3 625.6,421.1 621.9,422.0 618.0,417.5 617.5,412.0" fill="#fff" opacity="0.10"/><polygon points="630.8,415.9 635.4,419.7 635.8,425.9 631.6,426.8 627.1,421.8 626.7,415.9" fill="#fff" opacity="0.05"/><polygon points="642.0,420.6 647.3,424.8 647.7,431.5 642.7,432.2 637.6,426.7 637.2,420.4" fill="#fff" opacity="0.03"/><polygon points="655.0,426.0 655.1,428.2 655.5,435.1 655.6,438.5 649.8,432.4 649.4,425.7" fill="#fff" opacity="0.10"/><polygon points="590.3,405.0 592.9,408.3 593.4,412.8 591.4,413.7 588.9,410.4 588.4,406.1" fill="#fff" opacity="0.07"/><polygon points="596.0,407.7 598.8,411.3 599.3,415.9 597.0,416.8 594.3,413.3 593.8,408.8" fill="#fff" opacity="0.04"/><polygon points="602.3,410.7 605.4,414.5 605.9,419.5 603.3,420.3 600.3,416.5 599.8,411.7" fill="#fff" opacity="0.03"/><polygon points="609.4,414.0 612.9,418.2 613.4,423.4 610.4,424.2 607.1,420.1 606.6,415.1" fill="#fff" opacity="0.03"/><polygon points="617.4,417.8 621.3,422.3 621.7,427.9 618.3,428.6 614.6,424.1 614.1,418.8" fill="#fff" opacity="0.09"/><polygon points="626.4,422.1 630.8,427.0 631.3,432.9 627.3,433.6 623.2,428.6 622.7,423.0" fill="#fff" opacity="0.09"/><polygon points="636.8,427.0 641.8,432.5 642.2,438.8 637.6,439.2 632.9,433.8 632.5,427.9" fill="#fff" opacity="0.04"/><polygon points="648.8,432.7 654.6,438.8 654.9,445.5 649.5,445.8 644.1,439.8 643.7,433.4" fill="#fff" opacity="0.03"/><polygon points="655.5,435.9 655.7,439.3 656.0,446.1 656.2,449.5 656.0,446.1 655.7,439.3" fill="#fff" opacity="0.03"/><polygon points="588.5,410.6 591.0,414.0 591.5,418.3 589.5,419.0 589.3,417.0 588.8,412.8" fill="#fff" opacity="0.02"/><polygon points="593.9,413.5 596.6,417.1 597.1,421.6 594.9,422.3 592.3,418.8 591.8,414.5" fill="#fff" opacity="0.02"/><polygon points="599.9,416.7 602.9,420.6 603.3,425.3 600.9,426.0 598.1,422.2 597.6,417.6" fill="#fff" opacity="0.04"/><polygon points="606.6,420.3 609.8,424.4 610.3,429.4 607.5,430.1 604.4,425.9 603.9,421.2" fill="#fff" opacity="0.04"/><polygon points="614.0,424.3 617.7,428.8 618.2,434.1 615.0,434.6 611.5,430.1 611.0,425.1" fill="#fff" opacity="0.02"/><polygon points="622.5,428.9 626.6,433.8 627.1,439.4 623.4,439.8 619.5,434.9 619.1,429.6" fill="#fff" opacity="0.08"/><polygon points="632.1,434.0 636.8,439.4 637.2,445.4 633.0,445.6 628.6,440.3 628.2,434.6" fill="#fff" opacity="0.06"/><polygon points="643.2,440.0 648.6,446.0 648.9,452.3 644.0,452.4 639.0,446.4 638.6,440.4" fill="#fff" opacity="0.08"/><polygon points="656.1,446.9 656.3,450.2 656.6,456.9 656.8,460.2 651.0,453.5 650.6,447.1" fill="#fff" opacity="0.04"/><polygon points="592.0,419.0 594.5,422.6 595.0,426.9 592.9,427.5 590.5,423.9 590.0,419.8" fill="#fff" opacity="0.03"/><polygon points="597.6,422.4 600.4,426.2 600.9,430.8 598.6,431.3 595.9,427.5 595.4,423.1" fill="#fff" opacity="0.05"/><polygon points="603.9,426.1 607.0,430.3 607.5,435.0 604.9,435.5 601.9,431.4 601.5,426.8" fill="#fff" opacity="0.07"/><polygon points="611.0,430.4 614.4,434.8 614.9,439.9 611.9,440.2 608.6,435.8 608.2,431.0" fill="#fff" opacity="0.02"/><polygon points="618.9,435.1 622.8,439.9 623.2,445.3 619.8,445.5 616.2,440.7 615.7,435.6" fill="#fff" opacity="0.02"/><polygon points="627.9,440.5 632.2,445.8 632.7,451.4 628.8,451.5 624.7,446.2 624.2,440.8" fill="#fff" opacity="0.07"/><polygon points="638.2,446.6 643.1,452.5 643.5,458.5 639.0,458.3 634.3,452.5 633.9,446.8" fill="#fff" opacity="0.05"/><polygon points="650.0,453.7 655.7,460.2 656.0,466.7 650.7,466.2 645.4,459.7 645.0,453.6" fill="#fff" opacity="0.07"/><polygon points="656.6,457.6 656.8,460.9 657.1,467.4 657.3,470.6 657.1,467.4 656.8,460.9" fill="#fff" opacity="0.02"/><polygon points="590.1,424.1 592.6,427.7 593.0,431.8 591.1,432.3 590.8,430.3 590.4,426.2" fill="#fff" opacity="0.05"/><polygon points="595.5,427.7 598.2,431.5 598.7,435.8 596.5,436.2 593.9,432.5 593.4,428.3" fill="#fff" opacity="0.05"/><polygon points="601.5,431.6 604.4,435.7 604.9,440.3 602.4,440.6 599.6,436.5 599.1,432.1" fill="#fff" opacity="0.03"/><polygon points="608.1,436.0 611.4,440.4 611.9,445.2 609.1,445.4 606.0,441.0 605.5,436.4" fill="#fff" opacity="0.05"/><polygon points="615.6,440.8 619.2,445.6 619.7,450.7 616.5,450.8 613.1,446.0 612.6,441.2" fill="#fff" opacity="0.02"/><polygon points="624.0,446.4 628.1,451.6 628.5,457.0 624.9,456.9 621.0,451.7 620.6,446.5" fill="#fff" opacity="0.02"/><polygon points="633.5,452.6 638.2,458.4 638.6,464.1 634.4,463.8 630.0,458.1 629.6,452.6" fill="#fff" opacity="0.02"/><polygon points="644.5,459.8 649.8,466.2 650.1,472.3 645.3,471.7 640.3,465.4 639.9,459.6" fill="#fff" opacity="0.06"/><polygon points="657.2,468.1 657.3,471.3 657.7,477.7 657.8,480.8 652.1,473.8 651.8,467.6" fill="#fff" opacity="0.02"/><polygon points="593.5,432.6 596.1,436.4 596.6,440.6 594.5,440.9 592.0,437.1 591.6,433.1" fill="#fff" opacity="0.04"/><polygon points="599.2,436.7 602.0,440.7 602.5,445.1 600.2,445.3 597.5,441.3 597.0,437.1" fill="#fff" opacity="0.05"/><polygon points="605.5,441.2 608.6,445.5 609.1,450.2 606.4,450.2 603.5,445.9 603.0,441.5" fill="#fff" opacity="0.01"/><polygon points="612.5,446.2 615.9,450.9 616.4,455.8 613.4,455.7 610.2,451.0 609.7,446.3" fill="#fff" opacity="0.01"/><polygon points="620.4,451.8 624.2,457.0 624.7,462.1 621.3,461.9 617.7,456.7 617.2,451.8" fill="#fff" opacity="0.01"/><polygon points="629.3,458.1 633.6,463.8 634.0,469.3 630.2,468.8 626.1,463.2 625.6,458.0" fill="#fff" opacity="0.02"/><polygon points="639.5,465.4 644.4,471.7 644.8,477.5 640.3,476.7 635.7,470.5 635.2,465.0" fill="#fff" opacity="0.02"/><polygon points="651.2,473.7 656.8,480.8 657.1,486.9 651.9,485.8 646.6,478.9 646.2,473.0" fill="#fff" opacity="0.01"/><polygon points="657.7,478.4 657.9,481.5 658.2,487.8 658.3,490.8 658.2,487.8 657.9,481.5" fill="#fff" opacity="0.05"/><polygon points="591.7,437.3 594.1,441.0 594.6,445.1 592.6,445.2 592.4,443.3 591.9,439.3" fill="#fff" opacity="0.04"/><polygon points="597.1,441.4 599.7,445.4 600.2,449.7 598.0,449.8 595.4,445.8 595.0,441.7" fill="#fff" opacity="0.04"/><polygon points="603.0,446.0 606.0,450.3 606.4,454.8 604.0,454.7 601.2,450.5 600.7,446.2" fill="#fff" opacity="0.04"/><polygon points="609.7,451.1 612.9,455.8 613.4,460.5 610.6,460.3 607.5,455.6 607.0,451.2" fill="#fff" opacity="0.01"/><polygon points="617.1,456.8 620.7,461.9 621.1,466.8 618.0,466.4 614.5,461.4 614.1,456.7" fill="#fff" opacity="0.02"/><polygon points="625.4,463.2 629.5,468.8 629.9,474.0 626.3,473.4 622.5,467.9 622.0,462.9" fill="#fff" opacity="0.03"/><polygon points="634.9,470.5 639.5,476.6 639.8,482.2 635.7,481.3 631.4,475.2 631.0,470.0" fill="#fff" opacity="0.03"/><polygon points="645.7,478.8 650.9,485.7 651.3,491.5 646.5,490.3 641.6,483.6 641.2,478.0" fill="#fff" opacity="0.01"/><polygon points="658.2,488.4 658.4,491.5 658.7,497.6 658.9,500.6 653.3,493.1 652.9,487.2" fill="#fff" opacity="0.03"/><polygon points="595.1,445.9 597.6,449.8 598.1,453.9 596.0,453.9 593.5,450.0 593.1,446.0" fill="#fff" opacity="0.03"/><polygon points="600.7,450.5 603.5,454.8 604.0,459.1 601.7,458.9 599.0,454.7 598.5,450.6" fill="#fff" opacity="0.01"/><polygon points="607.0,455.7 610.1,460.3 610.5,464.8 607.9,464.5 605.0,460.0 604.5,455.6" fill="#fff" opacity="0.03"/><polygon points="614.0,461.5 617.4,466.5 617.8,471.2 614.9,470.7 611.6,465.8 611.2,461.3" fill="#fff" opacity="0.01"/><polygon points="621.8,467.9 625.6,473.4 626.1,478.3 622.7,477.6 619.1,472.3 618.7,467.5" fill="#fff" opacity="0.02"/><polygon points="630.7,475.2 635.0,481.2 635.4,486.5 631.5,485.5 627.5,479.6 627.0,474.6" fill="#fff" opacity="0.02"/><polygon points="640.7,483.5 645.6,490.1 645.9,495.7 641.5,494.4 637.0,487.8 636.6,482.5" fill="#fff" opacity="0.01"/><polygon points="652.3,493.0 657.8,500.4 658.1,506.3 653.0,504.5 647.8,497.3 647.4,491.7" fill="#fff" opacity="0.01"/><polygon points="658.7,498.3 658.9,501.3 659.2,507.2 659.3,510.2 659.2,507.2 658.9,501.3" fill="#fff" opacity="0.01"/><polygon points="593.2,450.1 595.6,454.0 596.1,457.9 594.1,457.8 593.9,455.9 593.4,452.0" fill="#fff" opacity="0.02"/><polygon points="598.6,454.8 601.2,459.0 601.7,463.1 599.5,462.9 596.9,458.7 596.5,454.8" fill="#fff" opacity="0.02"/><polygon points="604.5,460.0 607.4,464.5 607.9,468.9 605.4,468.5 602.6,464.0 602.2,459.8" fill="#fff" opacity="0.01"/><polygon points="611.1,465.8 614.4,470.7 614.8,475.2 612.0,474.7 609.0,469.8 608.5,465.5" fill="#fff" opacity="0.01"/><polygon points="618.5,472.3 622.1,477.6 622.5,482.4 619.4,481.6 616.0,476.3 615.5,471.8" fill="#fff" opacity="0.02"/><polygon points="626.8,479.5 630.8,485.4 631.2,490.4 627.6,489.3 623.8,483.6 623.4,478.8" fill="#fff" opacity="0.01"/><polygon points="636.2,487.7 640.7,494.2 641.1,499.5 637.0,498.1 632.7,491.8 632.3,486.7" fill="#fff" opacity="0.01"/><polygon points="646.9,497.1 652.0,504.3 652.4,509.9 647.6,508.1 642.8,501.1 642.4,495.7" fill="#fff" opacity="0.02"/><polygon points="659.2,507.9 659.4,510.9 659.7,516.7 659.8,519.6 654.3,511.7 654.0,506.1" fill="#fff" opacity="0.02"/><polygon points="596.5,458.8 599.1,462.9 599.5,466.9 597.4,466.6 595.0,462.5 594.6,458.7" fill="#fff" opacity="0.00"/><polygon points="602.2,464.0 605.0,468.5 605.4,472.6 603.1,472.2 600.4,467.8 600.0,463.8" fill="#fff" opacity="0.01"/><polygon points="608.5,469.8 611.5,474.7 612.0,479.0 609.4,478.4 606.4,473.6 606.0,469.4" fill="#fff" opacity="0.01"/><polygon points="615.4,476.3 618.8,481.5 619.2,486.1 616.3,485.2 613.1,480.1 612.6,475.7" fill="#fff" opacity="0.01"/><polygon points="623.2,483.5 627.0,489.2 627.4,494.0 624.1,492.9 620.5,487.3 620.1,482.7" fill="#fff" opacity="0.00"/><polygon points="632.0,491.7 636.2,497.9 636.6,503.0 632.8,501.6 628.8,495.4 628.4,490.6" fill="#fff" opacity="0.01"/><polygon points="642.0,500.9 646.7,507.8 647.1,513.2 642.7,511.3 638.2,504.5 637.8,499.4" fill="#fff" opacity="0.01"/><polygon points="653.4,511.5 658.8,519.2 659.1,524.9 654.0,522.5 648.9,515.0 648.6,509.6" fill="#fff" opacity="0.00"/><polygon points="659.7,517.3 659.9,520.2 660.2,525.9 660.3,528.8 660.2,525.9 659.9,520.2" fill="#fff" opacity="0.01"/><polygon points="594.6,462.5 597.1,466.6 597.5,470.5 595.5,470.1 595.3,468.2 594.9,464.4" fill="#fff" opacity="0.00"/><polygon points="600.0,467.8 602.7,472.2 603.1,476.2 600.9,475.7 598.4,471.3 597.9,467.5" fill="#fff" opacity="0.00"/><polygon points="606.0,473.6 608.9,478.3 609.3,482.5 606.9,481.8 604.1,477.2 603.6,473.1" fill="#fff" opacity="0.00"/><polygon points="612.6,480.0 615.8,485.2 616.2,489.6 613.4,488.7 610.4,483.6 609.9,479.4" fill="#fff" opacity="0.00"/><polygon points="619.9,487.2 623.5,492.8 623.9,497.4 620.8,496.2 617.4,490.8 616.9,486.3" fill="#fff" opacity="0.00"/><polygon points="628.1,495.3 632.1,501.4 632.5,506.2 629.0,504.8 625.2,498.8 624.8,494.1" fill="#fff" opacity="0.00"/><polygon points="637.4,504.3 641.9,511.1 642.3,516.2 638.2,514.3 634.0,507.7 633.6,502.9" fill="#fff" opacity="0.00"/><polygon points="648.0,514.7 653.1,522.2 653.4,527.6 648.7,525.2 644.0,517.9 643.6,512.8" fill="#fff" opacity="0.00"/><polygon points="660.2,526.6 660.3,529.4 660.6,535.0 660.8,537.7 655.3,529.6 655.0,524.1" fill="#fff" opacity="0.00"/><polygon points="598.0,471.3 600.5,475.6 601.0,479.5 598.9,478.9 596.4,474.7 596.0,470.9" fill="#fff" opacity="0.00"/><polygon points="603.6,477.1 606.4,481.8 606.8,485.8 604.5,485.1 601.9,480.5 601.4,476.6" fill="#fff" opacity="0.00"/><polygon points="609.9,483.5 612.9,488.6 613.4,492.8 610.8,491.8 607.8,486.9 607.4,482.8" fill="#fff" opacity="0.00"/><polygon points="616.8,490.7 620.2,496.1 620.6,500.5 617.7,499.3 614.5,494.0 614.0,489.7" fill="#fff" opacity="0.00"/><polygon points="624.6,498.6 628.3,504.6 628.7,509.2 625.4,507.7 621.8,501.9 621.4,497.4" fill="#fff" opacity="0.00"/><polygon points="633.3,507.5 637.5,514.1 637.8,519.0 634.1,517.1 630.1,510.7 629.7,506.0" fill="#fff" opacity="0.00"/><polygon points="643.1,517.6 647.9,524.9 648.2,530.1 643.9,527.7 639.4,520.7 639.0,515.7" fill="#fff" opacity="0.00"/><polygon points="654.4,529.2 659.8,537.3 660.1,542.7 655.0,539.8 650.0,532.0 649.7,526.8" fill="#fff" opacity="0.00"/><polygon points="660.7,535.6 660.8,538.4 661.1,543.8 661.2,546.6 661.1,543.8 660.8,538.4" fill="#fff" opacity="0.00"/><polygon points="655.0,426.0 839.0,405.5 815.0,569.0 666.0,639.0" fill="url(#rg)"/><polygon points="655.0,426.0 658.2,425.6 658.2,425.6 655.1,428.0 655.0,426.0 655.0,426.0" fill="rgb(39, 38, 34)"/><polygon points="665.8,424.8 672.4,424.1 672.4,424.1 665.9,426.8 659.1,425.5 659.1,425.5" fill="rgb(37, 36, 32)"/><polygon points="679.6,423.3 685.9,422.6 685.9,422.6 679.6,425.2 673.2,424.0 673.2,424.0" fill="rgb(45, 44, 40)"/><polygon points="692.8,421.8 698.8,421.1 698.8,421.1 692.8,423.7 686.7,422.5 686.7,422.5" fill="rgb(46, 45, 41)"/><polygon points="705.4,420.4 711.1,419.7 711.1,419.7 705.4,422.2 699.5,421.0 699.5,421.0" fill="rgb(45, 44, 40)"/><polygon points="717.5,419.0 722.9,418.4 722.9,418.4 717.4,420.9 711.8,419.7 711.8,419.7" fill="rgb(38, 37, 33)"/><polygon points="729.0,417.8 734.3,417.2 734.3,417.2 728.9,419.5 723.6,418.4 723.6,418.4" fill="rgb(38, 37, 33)"/><polygon points="740.1,416.5 745.1,416.0 745.1,416.0 740.0,418.3 734.9,417.1 734.9,417.1" fill="rgb(45, 44, 40)"/><polygon points="750.7,415.3 755.5,414.8 755.5,414.8 750.6,417.1 745.8,415.9 745.8,415.9" fill="rgb(46, 45, 41)"/><polygon points="760.9,414.2 765.5,413.7 765.5,413.7 760.8,415.9 756.1,414.7 756.1,414.7" fill="rgb(40, 39, 35)"/><polygon points="770.7,413.1 775.2,412.6 775.2,412.6 770.6,414.8 766.1,413.6 766.1,413.6" fill="rgb(59, 32, 30)"/><polygon points="780.1,412.1 784.4,411.6 784.4,411.6 780.0,413.7 775.7,412.5 775.7,412.5" fill="rgb(37, 36, 32)"/><polygon points="789.2,411.0 793.3,410.6 793.3,410.6 789.0,412.6 785.0,411.5 785.0,411.5" fill="rgb(26, 22, 20)"/><polygon points="797.9,410.1 801.9,409.6 801.9,409.6 797.8,411.6 793.9,410.5 793.9,410.5" fill="rgb(45, 44, 40)"/><polygon points="806.4,409.1 810.2,408.7 810.2,408.7 806.2,410.7 802.4,409.6 802.4,409.6" fill="rgb(41, 40, 36)"/><polygon points="814.5,408.2 818.2,407.8 818.2,407.8 814.3,409.7 810.7,408.7 810.7,408.7" fill="rgb(47, 46, 42)"/><polygon points="822.3,407.4 825.9,407.0 825.9,407.0 822.1,408.9 818.7,407.8 818.7,407.8" fill="rgb(46, 45, 41)"/><polygon points="829.9,406.5 833.4,406.1 833.4,406.1 829.7,408.0 826.4,406.9 826.4,406.9" fill="rgb(40, 39, 35)"/><polygon points="837.2,405.7 839.0,405.5 839.0,405.5 837.0,407.1 833.8,406.1 833.8,406.1" fill="rgb(45, 44, 40)"/><polygon points="839.0,405.5 839.0,405.5 839.0,405.5 838.8,406.9 839.0,405.5 839.0,405.5" fill="rgb(59, 32, 30)"/><polygon points="655.0,426.0 655.1,428.1 655.5,436.4 655.7,440.4 655.5,436.4 655.1,428.1" fill="rgb(46, 45, 41)"/><polygon points="658.6,425.6 665.5,427.0 665.8,435.0 659.3,439.9 655.5,436.4 655.1,428.1" fill="rgb(41, 40, 36)"/><polygon points="672.8,424.0 679.2,425.4 679.4,433.3 673.2,438.1 666.6,434.9 666.3,426.9" fill="rgb(43, 42, 38)"/><polygon points="686.3,422.5 692.4,423.9 692.5,431.6 686.5,436.3 680.2,433.2 680.1,425.3" fill="rgb(39, 38, 34)"/><polygon points="699.2,421.1 705.0,422.4 705.0,430.0 699.2,434.5 693.3,431.5 693.2,423.8" fill="rgb(52, 31, 29)"/><polygon points="711.5,419.7 717.1,421.0 716.9,428.5 711.4,432.9 705.7,429.9 705.8,422.3" fill="rgb(43, 42, 38)"/><polygon points="723.3,418.4 728.6,419.7 728.4,427.0 723.0,431.3 717.6,428.4 717.8,420.9" fill="rgb(30, 23, 19)"/><polygon points="734.6,417.1 739.7,418.4 739.4,425.6 734.1,429.8 729.1,426.9 729.3,419.6" fill="rgb(50, 31, 29)"/><polygon points="745.4,415.9 750.3,417.2 749.9,424.2 744.9,428.4 740.0,425.5 740.3,418.3" fill="rgb(41, 40, 36)"/><polygon points="755.8,414.8 760.5,416.0 760.0,422.9 755.1,427.0 750.5,424.2 750.9,417.1" fill="rgb(43, 42, 38)"/><polygon points="765.8,413.7 770.3,414.9 769.8,421.7 765.0,425.6 760.6,422.9 761.1,416.0" fill="rgb(46, 45, 41)"/><polygon points="775.5,412.6 779.7,413.8 779.1,420.5 774.5,424.4 770.3,421.6 770.9,414.8" fill="rgb(44, 43, 39)"/><polygon points="784.7,411.5 788.8,412.8 788.2,419.3 783.7,423.1 779.7,420.4 780.3,413.8" fill="rgb(41, 40, 36)"/><polygon points="793.6,410.6 797.5,411.8 796.8,418.2 792.5,421.9 788.7,419.2 789.3,412.7" fill="rgb(41, 40, 36)"/><polygon points="802.2,409.6 805.9,410.8 805.2,417.1 801.0,420.8 797.4,418.1 798.0,411.7" fill="rgb(58, 37, 28)"/><polygon points="810.5,408.7 814.0,409.9 813.3,416.1 809.2,419.7 805.7,417.1 806.4,410.7" fill="rgb(37, 36, 32)"/><polygon points="818.4,407.8 821.9,409.0 821.1,415.1 817.1,418.6 813.8,416.0 814.5,409.8" fill="rgb(28, 20, 17)"/><polygon points="826.1,406.9 829.5,408.1 828.6,414.1 824.7,417.6 821.6,415.0 822.3,408.9" fill="rgb(53, 36, 29)"/><polygon points="833.6,406.1 836.8,407.3 835.9,413.2 832.1,416.6 829.1,414.1 829.9,408.0" fill="rgb(31, 23, 19)"/><polygon points="839.0,405.5 838.8,407.0 837.9,412.9 837.5,415.8 836.3,413.1 837.2,407.2" fill="rgb(59, 33, 25)"/><polygon points="655.5,436.5 658.9,440.1 659.3,448.1 656.4,452.5 656.2,448.5 655.8,440.5" fill="rgb(27, 21, 17)"/><polygon points="666.2,435.1 672.8,438.2 673.1,446.0 666.8,450.9 660.1,448.0 659.8,440.0" fill="rgb(39, 38, 34)"/><polygon points="679.9,433.4 686.1,436.4 686.3,444.1 680.2,448.8 673.9,445.9 673.6,438.1" fill="rgb(51, 36, 26)"/><polygon points="692.9,431.7 698.8,434.7 698.9,442.2 693.0,446.8 687.0,444.0 686.9,436.3" fill="rgb(43, 42, 38)"/><polygon points="705.4,430.1 711.0,433.1 710.9,440.4 705.3,444.9 699.6,442.1 699.6,434.6" fill="rgb(43, 42, 38)"/><polygon points="717.3,428.5 722.6,431.5 722.5,438.7 717.0,443.1 711.6,440.3 711.7,433.0" fill="rgb(40, 39, 35)"/><polygon points="728.7,427.1 733.8,430.0 733.6,437.0 728.3,441.3 723.2,438.6 723.3,431.4" fill="rgb(31, 23, 19)"/><polygon points="739.7,425.7 744.5,428.5 744.2,435.4 739.1,439.6 734.2,436.9 734.5,429.9" fill="rgb(53, 36, 28)"/><polygon points="750.2,424.3 754.8,427.1 754.4,433.9 749.5,438.0 744.8,435.4 745.2,428.4" fill="rgb(26, 20, 18)"/><polygon points="760.3,423.0 764.7,425.8 764.3,432.5 759.5,436.5 755.0,433.8 755.4,427.0" fill="rgb(46, 45, 41)"/><polygon points="770.1,421.7 774.2,424.5 773.7,431.1 769.1,435.0 764.8,432.4 765.3,425.7" fill="rgb(43, 42, 38)"/><polygon points="779.4,420.5 783.4,423.3 782.8,429.7 778.3,433.6 774.3,431.0 774.8,424.4" fill="rgb(26, 22, 19)"/><polygon points="788.4,419.4 792.2,422.1 791.6,428.4 787.2,432.2 783.4,429.6 783.9,423.2" fill="rgb(42, 41, 37)"/><polygon points="797.1,418.3 800.7,420.9 800.0,427.1 795.8,430.8 792.1,428.3 792.7,422.0" fill="rgb(45, 44, 40)"/><polygon points="805.5,417.2 808.9,419.8 808.2,425.9 804.1,429.6 800.5,427.1 801.2,420.8" fill="rgb(51, 36, 29)"/><polygon points="813.5,416.1 816.8,418.7 816.1,424.8 812.1,428.3 808.7,425.9 809.4,419.7" fill="rgb(30, 20, 20)"/><polygon points="821.3,415.1 824.5,417.7 823.7,423.6 819.8,427.1 816.6,424.7 817.3,418.7" fill="rgb(31, 23, 20)"/><polygon points="828.8,414.2 831.9,416.7 831.1,422.5 827.2,426.0 824.1,423.6 824.9,417.6" fill="rgb(37, 36, 32)"/><polygon points="836.1,413.2 837.5,415.9 836.6,421.7 834.4,424.8 831.5,422.5 832.3,416.6" fill="rgb(42, 41, 37)"/><polygon points="837.9,413.0 837.5,415.9 836.6,421.7 836.2,424.6 836.6,421.7 837.5,415.9" fill="rgb(37, 36, 32)"/><polygon points="656.2,448.7 656.4,452.6 656.8,460.4 657.0,464.2 656.8,460.4 656.4,452.6" fill="rgb(28, 21, 17)"/><polygon points="659.7,448.1 666.4,451.0 666.7,458.7 660.5,463.6 656.8,460.4 656.4,452.6" fill="rgb(35, 34, 30)"/><polygon points="673.5,446.1 679.8,449.0 680.0,456.5 674.0,461.3 667.5,458.6 667.2,450.9" fill="rgb(44, 43, 39)"/><polygon points="686.6,444.1 692.7,447.0 692.7,454.3 686.9,459.0 680.8,456.4 680.6,448.8" fill="rgb(36, 35, 31)"/><polygon points="699.2,442.3 704.9,445.1 704.9,452.3 699.3,456.8 693.5,454.2 693.4,446.9" fill="rgb(29, 20, 17)"/><polygon points="711.3,440.5 716.7,443.2 716.6,450.3 711.1,454.8 705.6,452.2 705.7,444.9" fill="rgb(29, 23, 18)"/><polygon points="722.8,438.7 728.0,441.5 727.8,448.4 722.5,452.8 717.3,450.2 717.4,443.1" fill="rgb(53, 34, 27)"/><polygon points="733.9,437.1 738.8,439.8 738.5,446.6 733.4,450.9 728.4,448.3 728.6,441.4" fill="rgb(36, 35, 31)"/><polygon points="744.5,435.5 749.2,438.2 748.8,444.9 743.9,449.1 739.1,446.5 739.4,439.7" fill="rgb(28, 23, 20)"/><polygon points="754.7,434.0 759.2,436.6 758.8,443.2 754.0,447.3 749.4,444.8 749.8,438.1" fill="rgb(37, 36, 32)"/><polygon points="764.5,432.5 768.8,435.1 768.3,441.6 763.6,445.6 759.3,443.1 759.8,436.5" fill="rgb(40, 39, 35)"/><polygon points="774.0,431.1 778.0,433.7 777.5,440.1 773.0,444.0 768.9,441.5 769.3,435.0" fill="rgb(55, 36, 30)"/><polygon points="783.1,429.8 786.9,432.3 786.4,438.6 782.0,442.4 778.0,440.0 778.6,433.6" fill="rgb(35, 34, 30)"/><polygon points="791.8,428.5 795.5,431.0 794.9,437.1 790.6,440.9 786.9,438.5 787.5,432.2" fill="rgb(43, 42, 38)"/><polygon points="800.3,427.2 803.8,429.7 803.1,435.8 799.0,439.4 795.4,437.1 796.0,430.9" fill="rgb(43, 42, 38)"/><polygon points="808.4,426.0 811.8,428.4 811.1,434.4 807.0,438.0 803.6,435.7 804.3,429.6" fill="rgb(30, 22, 17)"/><polygon points="816.3,424.8 819.5,427.2 818.8,433.1 814.8,436.6 811.6,434.3 812.3,428.4" fill="rgb(52, 34, 27)"/><polygon points="823.9,423.7 827.0,426.1 826.2,431.9 822.4,435.3 819.2,433.0 820.0,427.2" fill="rgb(27, 21, 19)"/><polygon points="831.3,422.6 834.2,425.0 833.4,430.7 829.6,434.1 826.6,431.8 827.4,426.0" fill="rgb(57, 36, 26)"/><polygon points="836.6,421.8 836.2,424.7 835.4,430.3 834.9,433.1 833.8,430.6 834.6,424.9" fill="rgb(54, 35, 26)"/><polygon points="656.8,460.5 660.0,463.8 660.4,471.4 657.6,475.7 657.4,471.9 657.0,464.4" fill="rgb(42, 41, 37)"/><polygon points="667.1,458.8 673.6,461.5 673.8,468.9 667.7,473.7 661.2,471.2 660.9,463.7" fill="rgb(35, 34, 30)"/><polygon points="680.4,456.5 686.5,459.2 686.7,466.4 680.8,471.2 674.6,468.7 674.4,461.3" fill="rgb(30, 21, 20)"/><polygon points="693.1,454.4 698.9,457.0 698.9,464.1 693.3,468.8 687.4,466.3 687.3,459.1" fill="rgb(43, 42, 39)"/><polygon points="705.3,452.3 710.8,454.9 710.7,461.9 705.2,466.4 699.7,464.0 699.6,456.9" fill="rgb(27, 21, 19)"/><polygon points="716.9,450.4 722.2,453.0 722.0,459.8 716.7,464.2 711.4,461.8 711.5,454.8" fill="rgb(36, 35, 31)"/><polygon points="728.1,448.5 733.1,451.0 732.8,457.8 727.7,462.1 722.7,459.7 722.8,452.8" fill="rgb(38, 37, 33)"/><polygon points="738.8,446.7 743.6,449.2 743.3,455.8 738.3,460.0 733.5,457.7 733.7,450.9" fill="rgb(42, 41, 37)"/><polygon points="749.1,444.9 753.6,447.4 753.3,454.0 748.4,458.1 743.9,455.7 744.2,449.1" fill="rgb(56, 36, 24)"/><polygon points="759.0,443.3 763.3,445.7 762.9,452.1 758.2,456.2 753.9,453.8 754.2,447.3" fill="rgb(44, 43, 40)"/><polygon points="768.6,441.7 772.7,444.1 772.2,450.4 767.6,454.3 763.5,452.0 763.9,445.6" fill="rgb(44, 43, 40)"/><polygon points="777.8,440.1 781.7,442.5 781.1,448.7 776.7,452.6 772.7,450.3 773.2,444.0" fill="rgb(44, 43, 40)"/><polygon points="786.6,438.6 790.3,441.0 789.8,447.1 785.5,450.9 781.7,448.6 782.2,442.4" fill="rgb(41, 40, 36)"/><polygon points="795.1,437.2 798.7,439.6 798.1,445.5 793.9,449.3 790.3,447.0 790.9,440.9" fill="rgb(50, 33, 25)"/><polygon points="803.4,435.8 806.8,438.1 806.1,444.0 802.0,447.7 798.6,445.5 799.2,439.5" fill="rgb(44, 43, 40)"/><polygon points="811.3,434.5 814.6,436.8 813.9,442.6 809.9,446.2 806.6,443.9 807.3,438.1" fill="rgb(41, 40, 36)"/><polygon points="819.0,433.2 822.1,435.5 821.4,441.2 817.5,444.7 814.3,442.5 815.0,436.7" fill="rgb(36, 35, 31)"/><polygon points="826.4,431.9 829.4,434.2 828.6,439.8 824.9,443.3 821.8,441.1 822.6,435.4" fill="rgb(49, 31, 24)"/><polygon points="833.6,430.7 834.9,433.2 834.1,438.8 832.0,441.9 829.0,439.7 829.8,434.1" fill="rgb(42, 41, 37)"/><polygon points="835.3,430.4 834.9,433.2 834.1,438.8 833.7,441.5 834.1,438.8 834.9,433.2" fill="rgb(49, 34, 28)"/><polygon points="657.4,472.1 657.6,475.8 658.0,483.2 658.1,486.8 658.0,483.2 657.6,475.8" fill="rgb(29, 21, 17)"/><polygon points="660.8,471.4 667.3,473.9 667.6,481.2 661.5,486.1 658.0,483.2 657.6,475.8" fill="rgb(36, 35, 32)"/><polygon points="674.2,468.9 680.4,471.4 680.6,478.5 674.7,483.3 668.4,481.0 668.1,473.7" fill="rgb(44, 43, 39)"/><polygon points="687.0,466.5 692.9,468.9 693.0,476.0 687.3,480.6 681.3,478.4 681.2,471.2" fill="rgb(36, 35, 32)"/><polygon points="699.3,464.2 704.9,466.6 704.9,473.5 699.3,478.1 693.7,475.8 693.6,468.8" fill="rgb(37, 36, 32)"/><polygon points="711.1,462.0 716.4,464.4 716.2,471.2 710.9,475.6 705.5,473.4 705.6,466.5" fill="rgb(25, 19, 18)"/><polygon points="722.3,459.9 727.4,462.3 727.2,468.9 722.0,473.3 716.9,471.0 717.0,464.3" fill="rgb(42, 41, 37)"/><polygon points="733.2,457.8 738.0,460.2 737.7,466.7 732.7,471.0 727.8,468.8 728.0,462.1" fill="rgb(43, 42, 38)"/><polygon points="743.6,455.9 748.1,458.2 747.8,464.6 743.0,468.8 738.3,466.6 738.6,460.1" fill="rgb(42, 41, 37)"/><polygon points="753.6,454.0 757.9,456.3 757.5,462.6 752.8,466.7 748.4,464.5 748.7,458.1" fill="rgb(36, 35, 32)"/><polygon points="763.2,452.2 767.4,454.5 766.9,460.7 762.3,464.7 758.1,462.5 758.5,456.2" fill="rgb(39, 38, 34)"/><polygon points="772.5,450.4 776.4,452.7 775.9,458.8 771.5,462.8 767.4,460.6 767.9,454.4" fill="rgb(29, 22, 17)"/><polygon points="781.4,448.8 785.2,451.0 784.6,457.0 780.3,460.9 776.5,458.7 777.0,452.6" fill="rgb(54, 33, 24)"/><polygon points="790.0,447.2 793.6,449.4 793.0,455.3 788.8,459.1 785.1,456.9 785.7,450.9" fill="rgb(30, 20, 16)"/><polygon points="798.3,445.6 801.8,447.8 801.1,453.6 797.0,457.3 793.5,455.2 794.1,449.3" fill="rgb(49, 31, 25)"/><polygon points="806.3,444.1 809.7,446.3 809.0,452.0 805.0,455.6 801.6,453.5 802.3,447.7" fill="rgb(35, 34, 31)"/><polygon points="814.1,442.6 817.3,444.8 816.5,450.5 812.7,454.0 809.4,451.9 810.1,446.2" fill="rgb(51, 34, 28)"/><polygon points="821.6,441.2 824.6,443.4 823.9,448.9 820.1,452.4 817.0,450.4 817.7,444.7" fill="rgb(41, 40, 36)"/><polygon points="828.8,439.9 831.7,442.0 831.0,447.5 827.3,450.9 824.3,448.9 825.1,443.3" fill="rgb(48, 33, 24)"/><polygon points="834.1,438.9 833.7,441.6 832.9,447.1 832.5,449.8 831.4,447.4 832.2,441.9" fill="rgb(38, 37, 33)"/><polygon points="658.0,483.3 661.1,486.3 661.5,493.5 658.7,497.7 658.5,494.1 658.1,486.9" fill="rgb(35, 34, 30)"/><polygon points="668.0,481.2 674.3,483.5 674.5,490.5 668.6,495.4 662.3,493.3 661.9,486.1" fill="rgb(41, 40, 37)"/><polygon points="681.0,478.5 686.9,480.8 687.0,487.7 681.3,492.5 675.3,490.4 675.1,483.3" fill="rgb(35, 34, 30)"/><polygon points="693.3,476.0 699.0,478.3 699.0,485.0 693.5,489.7 687.8,487.6 687.6,480.7" fill="rgb(42, 41, 38)"/><polygon points="705.2,473.5 710.6,475.8 710.5,482.5 705.2,487.0 699.7,484.9 699.7,478.1" fill="rgb(27, 20, 18)"/><polygon points="716.6,471.2 721.7,473.4 721.5,480.0 716.4,484.4 711.2,482.3 711.3,475.7" fill="rgb(41, 40, 37)"/><polygon points="727.5,468.9 732.4,471.2 732.2,477.6 727.1,481.9 722.2,479.8 722.3,473.3" fill="rgb(53, 30, 28)"/><polygon points="738.0,466.8 742.6,469.0 742.3,475.3 737.5,479.5 732.8,477.5 733.0,471.0" fill="rgb(38, 37, 33)"/><polygon points="748.1,464.7 752.5,466.9 752.2,473.1 747.4,477.2 742.9,475.2 743.2,468.8" fill="rgb(25, 22, 17)"/><polygon points="757.8,462.7 762.0,464.9 761.6,471.0 757.0,475.0 752.7,473.0 753.1,466.8" fill="rgb(39, 39, 35)"/><polygon points="767.2,460.7 771.2,462.9 770.7,468.9 766.3,472.9 762.2,470.9 762.6,464.7" fill="rgb(35, 34, 30)"/><polygon points="776.2,458.9 780.0,461.0 779.5,467.0 775.2,470.8 771.3,468.8 771.7,462.8" fill="rgb(52, 29, 25)"/><polygon points="784.9,457.1 788.6,459.2 788.0,465.1 783.8,468.9 780.0,466.8 780.6,460.9" fill="rgb(47, 35, 25)"/><polygon points="793.3,455.4 796.8,457.5 796.2,463.2 792.1,466.9 788.5,464.9 789.1,459.1" fill="rgb(28, 21, 17)"/><polygon points="801.4,453.7 804.7,455.8 804.1,461.4 800.1,465.1 796.7,463.1 797.3,457.4" fill="rgb(36, 35, 31)"/><polygon points="809.2,452.1 812.4,454.1 811.7,459.7 807.8,463.3 804.5,461.3 805.2,455.7" fill="rgb(25, 19, 19)"/><polygon points="816.7,450.5 819.8,452.6 819.1,458.1 815.3,461.6 812.2,459.6 812.9,454.0" fill="rgb(25, 20, 17)"/><polygon points="824.1,449.0 827.0,451.0 826.3,456.5 822.6,459.9 819.6,458.0 820.3,452.5" fill="rgb(53, 32, 26)"/><polygon points="831.1,447.5 832.5,449.9 831.7,455.2 829.6,458.3 826.7,456.4 827.5,450.9" fill="rgb(39, 38, 34)"/><polygon points="832.9,447.2 832.5,449.9 831.7,455.2 831.3,457.9 831.7,455.2 832.5,449.9" fill="rgb(39, 38, 34)"/><polygon points="658.5,494.2 658.7,497.8 659.1,504.8 659.2,508.3 659.1,504.8 658.7,497.8" fill="rgb(41, 40, 36)"/><polygon points="661.9,493.5 668.2,495.6 668.5,502.5 662.5,507.5 659.1,504.8 658.7,497.8" fill="rgb(33, 33, 29)"/><polygon points="674.9,490.6 680.9,492.7 681.1,499.5 675.4,504.3 669.3,502.3 669.0,495.4" fill="rgb(41, 40, 36)"/><polygon points="687.4,487.8 693.1,489.9 693.2,496.5 687.6,501.2 681.8,499.3 681.7,492.5" fill="rgb(53, 29, 23)"/><polygon points="699.4,485.1 704.8,487.2 704.8,493.7 699.4,498.3 693.9,496.4 693.8,489.7" fill="rgb(29, 20, 16)"/><polygon points="710.8,482.5 716.0,484.6 715.9,491.0 710.7,495.5 705.5,493.6 705.5,487.0" fill="rgb(37, 36, 33)"/><polygon points="721.9,480.0 726.8,482.1 726.6,488.4 721.6,492.8 716.6,490.9 716.7,484.4" fill="rgb(35, 34, 31)"/><polygon points="732.5,477.6 737.2,479.7 736.9,485.9 732.0,490.2 727.3,488.3 727.4,481.9" fill="rgb(35, 34, 31)"/><polygon points="742.6,475.3 747.1,477.4 746.8,483.5 742.1,487.7 737.5,485.8 737.8,479.6" fill="rgb(55, 34, 25)"/><polygon points="752.4,473.1 756.7,475.2 756.4,481.2 751.7,485.3 747.4,483.4 747.7,477.3" fill="rgb(41, 40, 36)"/><polygon points="761.9,471.0 766.0,473.0 765.5,479.0 761.1,483.0 756.9,481.1 757.3,475.1" fill="rgb(27, 22, 18)"/><polygon points="771.0,469.0 774.9,471.0 774.4,476.8 770.0,480.8 766.1,478.9 766.5,472.9" fill="rgb(33, 33, 29)"/><polygon points="779.8,467.0 783.5,469.0 783.0,474.8 778.7,478.6 774.9,476.7 775.4,470.9" fill="rgb(47, 32, 23)"/><polygon points="788.2,465.1 791.8,467.1 791.2,472.8 787.1,476.5 783.5,474.7 784.0,468.9" fill="rgb(33, 33, 29)"/><polygon points="796.4,463.3 799.8,465.2 799.2,470.8 795.2,474.5 791.7,472.7 792.3,467.0" fill="rgb(49, 29, 27)"/><polygon points="804.3,461.5 807.6,463.4 806.9,469.0 803.0,472.6 799.7,470.7 800.3,465.1" fill="rgb(23, 21, 16)"/><polygon points="811.9,459.8 815.1,461.7 814.4,467.2 810.6,470.7 807.4,468.9 808.0,463.3" fill="rgb(38, 37, 33)"/><polygon points="819.3,458.1 822.3,460.0 821.6,465.4 817.9,468.9 814.8,467.0 815.5,461.6" fill="rgb(26, 21, 17)"/><polygon points="826.5,456.5 829.4,458.4 828.6,463.7 825.0,467.1 822.0,465.3 822.8,459.9" fill="rgb(36, 35, 32)"/><polygon points="831.7,455.3 831.3,458.0 830.5,463.2 830.1,465.8 829.0,463.6 829.8,458.3" fill="rgb(24, 21, 16)"/><polygon points="659.1,504.9 662.2,507.7 662.5,514.5 659.8,518.6 659.6,515.2 659.3,508.4" fill="rgb(37, 36, 32)"/><polygon points="668.9,502.5 675.0,504.5 675.2,511.2 669.4,516.0 663.3,514.3 662.9,507.5" fill="rgb(52, 34, 24)"/><polygon points="681.5,499.5 687.3,501.4 687.4,508.0 681.8,512.8 675.9,511.0 675.7,504.3" fill="rgb(40, 39, 36)"/><polygon points="693.5,496.6 699.1,498.5 699.1,505.0 693.7,509.6 688.1,507.8 688.0,501.2" fill="rgb(48, 30, 23)"/><polygon points="705.1,493.7 710.4,495.7 710.3,502.0 705.1,506.6 699.8,504.8 699.8,498.3" fill="rgb(23, 18, 16)"/><polygon points="716.2,491.0 721.3,493.0 721.1,499.2 716.0,503.7 711.0,501.9 711.0,495.5" fill="rgb(52, 29, 27)"/><polygon points="726.9,488.5 731.7,490.4 731.5,496.5 726.6,500.9 721.7,499.1 721.9,492.8" fill="rgb(39, 38, 35)"/><polygon points="737.2,486.0 741.8,487.9 741.5,493.9 736.7,498.2 732.1,496.4 732.3,490.2" fill="rgb(42, 41, 37)"/><polygon points="747.1,483.6 751.4,485.5 751.1,491.4 746.5,495.6 742.1,493.8 742.4,487.7" fill="rgb(39, 38, 35)"/><polygon points="756.6,481.2 760.8,483.2 760.4,489.0 755.9,493.1 751.7,491.3 752.0,485.3" fill="rgb(50, 32, 25)"/><polygon points="765.8,479.0 769.8,480.9 769.3,486.7 764.9,490.7 760.9,488.9 761.3,483.0" fill="rgb(47, 30, 24)"/><polygon points="774.7,476.9 778.5,478.8 778.0,484.5 773.7,488.4 769.8,486.6 770.3,480.8" fill="rgb(28, 19, 18)"/><polygon points="783.2,474.8 786.8,476.7 786.3,482.3 782.1,486.1 778.5,484.3 779.0,478.6" fill="rgb(23, 19, 16)"/><polygon points="791.5,472.8 794.9,474.7 794.3,480.2 790.3,483.9 786.8,482.2 787.3,476.6" fill="rgb(37, 36, 32)"/><polygon points="799.4,470.9 802.8,472.7 802.1,478.2 798.2,481.8 794.8,480.1 795.4,474.6" fill="rgb(45, 28, 28)"/><polygon points="807.1,469.0 810.3,470.8 809.7,476.2 805.8,479.8 802.6,478.1 803.2,472.6" fill="rgb(28, 20, 17)"/><polygon points="814.6,467.2 817.7,469.0 817.0,474.3 813.2,477.9 810.1,476.1 810.8,470.7" fill="rgb(45, 31, 24)"/><polygon points="821.8,465.4 824.8,467.3 824.0,472.5 820.4,476.0 817.4,474.2 818.1,468.9" fill="rgb(39, 38, 35)"/><polygon points="828.8,463.7 830.1,465.9 829.4,471.1 827.3,474.1 824.4,472.4 825.2,467.2" fill="rgb(37, 37, 33)"/><polygon points="830.5,463.3 830.1,465.9 829.4,471.1 829.0,473.7 829.4,471.1 830.1,465.9" fill="rgb(27, 20, 17)"/><polygon points="659.6,515.3 659.8,518.7 660.1,525.4 660.3,528.7 660.1,525.4 659.8,518.7" fill="rgb(36, 35, 32)"/><polygon points="662.9,514.5 669.0,516.3 669.3,522.8 663.5,527.8 660.1,525.4 659.8,518.7" fill="rgb(34, 33, 30)"/><polygon points="675.6,511.2 681.4,513.0 681.6,519.4 676.0,524.2 670.1,522.6 669.8,516.0" fill="rgb(38, 37, 33)"/><polygon points="687.7,508.0 693.3,509.8 693.4,516.2 688.0,520.9 682.3,519.2 682.2,512.8" fill="rgb(36, 35, 32)"/><polygon points="699.4,505.0 704.7,506.8 704.7,513.0 699.5,517.6 694.1,516.0 694.0,509.6" fill="rgb(35, 34, 31)"/><polygon points="710.6,502.1 715.7,503.8 715.6,510.0 710.5,514.5 705.4,512.8 705.4,506.6" fill="rgb(32, 32, 28)"/><polygon points="721.4,499.3 726.3,501.0 726.1,507.1 721.1,511.5 716.3,509.8 716.4,503.7" fill="rgb(33, 32, 29)"/><polygon points="731.8,496.6 736.4,498.3 736.2,504.3 731.4,508.6 726.7,506.9 726.9,500.9" fill="rgb(41, 40, 36)"/><polygon points="741.8,494.0 746.2,495.7 745.9,501.6 741.2,505.8 736.8,504.2 737.0,498.2" fill="rgb(32, 32, 28)"/><polygon points="751.4,491.5 755.6,493.2 755.2,499.0 750.7,503.1 746.4,501.5 746.7,495.6" fill="rgb(41, 41, 37)"/><polygon points="760.6,489.1 764.7,490.8 764.2,496.5 759.9,500.6 755.8,498.9 756.1,493.1" fill="rgb(41, 40, 36)"/><polygon points="769.6,486.7 773.4,488.5 773.0,494.1 768.7,498.1 764.8,496.4 765.2,490.7" fill="rgb(28, 19, 18)"/><polygon points="778.2,484.5 781.9,486.3 781.4,491.8 777.2,495.6 773.5,494.0 773.9,488.4" fill="rgb(50, 29, 24)"/><polygon points="786.5,482.3 790.1,484.1 789.5,489.5 785.4,493.3 781.9,491.7 782.4,486.1" fill="rgb(53, 29, 23)"/><polygon points="794.6,480.2 798.0,482.0 797.4,487.4 793.4,491.1 790.0,489.4 790.5,484.0" fill="rgb(27, 21, 16)"/><polygon points="802.4,478.2 805.6,480.0 805.0,485.3 801.1,488.9 797.8,487.2 798.4,481.9" fill="rgb(28, 18, 16)"/><polygon points="809.9,476.2 813.0,478.0 812.3,483.2 808.6,486.8 805.4,485.1 806.0,479.8" fill="rgb(32, 32, 28)"/><polygon points="817.2,474.3 820.1,476.1 819.4,481.3 815.8,484.8 812.7,483.1 813.4,477.9" fill="rgb(37, 36, 32)"/><polygon points="824.2,472.5 827.1,474.2 826.3,479.3 822.8,482.8 819.9,481.1 820.6,476.0" fill="rgb(25, 21, 16)"/><polygon points="829.4,471.2 829.0,473.7 828.2,478.8 827.9,481.3 826.8,479.2 827.5,474.1" fill="rgb(53, 32, 27)"/><polygon points="660.1,525.5 663.1,528.0 663.4,534.5 660.8,538.5 660.6,535.3 660.3,528.8" fill="rgb(36, 35, 31)"/><polygon points="669.7,522.8 675.6,524.4 675.8,530.8 670.2,535.7 664.2,534.2 663.9,527.8" fill="rgb(33, 32, 29)"/><polygon points="682.0,519.4 687.6,521.1 687.7,527.3 682.3,532.1 676.6,530.6 676.4,524.2" fill="rgb(50, 31, 22)"/><polygon points="693.7,516.2 699.1,517.8 699.2,524.0 693.9,528.6 688.4,527.1 688.3,520.9" fill="rgb(44, 32, 27)"/><polygon points="705.1,513.0 710.2,514.7 710.1,520.8 705.0,525.3 699.8,523.8 699.8,517.6" fill="rgb(33, 32, 29)"/><polygon points="715.9,510.0 720.8,511.7 720.7,517.7 715.7,522.1 710.8,520.6 710.8,514.5" fill="rgb(23, 19, 16)"/><polygon points="726.4,507.1 731.1,508.8 730.9,514.7 726.0,519.0 721.3,517.5 721.5,511.5" fill="rgb(50, 30, 25)"/><polygon points="736.5,504.3 740.9,506.0 740.6,511.8 736.0,516.0 731.5,514.5 731.7,508.6" fill="rgb(41, 40, 36)"/><polygon points="746.1,501.6 750.4,503.3 750.1,509.0 745.5,513.2 741.2,511.6 741.5,505.8" fill="rgb(32, 31, 28)"/><polygon points="755.5,499.1 759.6,500.7 759.2,506.4 754.8,510.4 750.6,508.9 751.0,503.1" fill="rgb(52, 29, 22)"/><polygon points="764.5,496.6 768.4,498.2 768.0,503.8 763.7,507.7 759.7,506.2 760.1,500.6" fill="rgb(48, 29, 27)"/><polygon points="773.2,494.1 776.9,495.8 776.5,501.3 772.3,505.2 768.5,503.6 768.9,498.1" fill="rgb(47, 31, 26)"/><polygon points="781.6,491.8 785.2,493.5 784.7,498.9 780.6,502.7 777.0,501.1 777.4,495.7" fill="rgb(38, 37, 34)"/><polygon points="789.7,489.6 793.2,491.2 792.6,496.5 788.6,500.3 785.1,498.7 785.7,493.3" fill="rgb(36, 35, 31)"/><polygon points="797.6,487.4 800.9,489.0 800.3,494.3 796.4,498.0 793.1,496.4 793.6,491.1" fill="rgb(22, 19, 18)"/><polygon points="805.2,485.3 808.3,486.9 807.7,492.1 803.9,495.7 800.7,494.2 801.3,488.9" fill="rgb(39, 38, 35)"/><polygon points="812.5,483.2 815.6,484.9 814.9,490.0 811.2,493.5 808.1,492.0 808.8,486.8" fill="rgb(38, 37, 34)"/><polygon points="819.6,481.3 822.5,482.9 821.8,488.0 818.2,491.4 815.3,489.9 816.0,484.8" fill="rgb(33, 32, 29)"/><polygon points="826.5,479.4 827.9,481.4 827.1,486.4 825.1,489.4 822.2,487.8 823.0,482.8" fill="rgb(26, 19, 17)"/><polygon points="828.2,478.9 827.9,481.4 827.1,486.4 826.8,488.9 827.1,486.4 827.9,481.4" fill="rgb(25, 18, 17)"/><polygon points="660.6,535.4 660.8,538.6 661.1,545.0 661.3,548.1 661.1,545.0 660.8,538.6" fill="rgb(38, 38, 34)"/><polygon points="663.8,534.5 669.8,535.9 670.1,542.2 664.4,547.1 661.1,545.0 660.8,538.6" fill="rgb(25, 19, 18)"/><polygon points="676.2,530.8 681.9,532.3 682.1,538.5 676.6,543.3 670.8,542.0 670.6,535.7" fill="rgb(34, 33, 30)"/><polygon points="688.1,527.3 693.5,528.8 693.6,534.9 688.3,539.6 682.8,538.3 682.6,532.1" fill="rgb(32, 32, 28)"/><polygon points="699.5,524.0 704.7,525.5 704.7,531.5 699.5,536.0 694.3,534.7 694.2,528.6" fill="rgb(38, 38, 34)"/><polygon points="710.5,520.8 715.4,522.3 715.3,528.2 710.3,532.6 705.3,531.3 705.3,525.3" fill="rgb(36, 35, 32)"/><polygon points="721.0,517.7 725.7,519.2 725.6,525.0 720.7,529.4 715.9,528.0 716.0,522.1" fill="rgb(40, 39, 36)"/><polygon points="731.2,514.7 735.7,516.2 735.4,521.9 730.7,526.2 726.2,524.8 726.3,519.0" fill="rgb(32, 32, 28)"/><polygon points="740.9,511.8 745.3,513.3 745.0,519.0 740.4,523.2 736.0,521.7 736.3,516.0" fill="rgb(45, 30, 25)"/><polygon points="750.4,509.0 754.5,510.6 754.1,516.1 749.7,520.2 745.5,518.8 745.8,513.2" fill="rgb(33, 32, 29)"/><polygon points="759.4,506.4 763.4,507.9 763.0,513.4 758.7,517.4 754.7,516.0 755.0,510.4" fill="rgb(38, 37, 33)"/><polygon points="768.2,503.8 772.0,505.3 771.6,510.7 767.4,514.7 763.5,513.2 763.9,507.7" fill="rgb(48, 29, 26)"/><polygon points="776.7,501.3 780.3,502.8 779.8,508.2 775.7,512.0 772.1,510.6 772.5,505.2" fill="rgb(36, 35, 32)"/><polygon points="784.9,498.9 788.4,500.4 787.8,505.7 783.8,509.5 780.3,508.0 780.8,502.7" fill="rgb(44, 32, 24)"/><polygon points="792.8,496.6 796.2,498.1 795.6,503.3 791.7,507.0 788.3,505.5 788.8,500.3" fill="rgb(36, 35, 32)"/><polygon points="800.5,494.3 803.7,495.9 803.1,501.0 799.3,504.6 796.0,503.2 796.6,498.0" fill="rgb(22, 19, 15)"/><polygon points="807.9,492.1 811.0,493.7 810.3,498.7 806.6,502.3 803.5,500.8 804.1,495.7" fill="rgb(24, 19, 17)"/><polygon points="815.1,490.0 818.0,491.6 817.3,496.5 813.7,500.0 810.7,498.6 811.4,493.5" fill="rgb(37, 36, 32)"/><polygon points="822.0,488.0 824.9,489.5 824.2,494.4 820.6,497.9 817.8,496.4 818.4,491.4" fill="rgb(25, 18, 17)"/><polygon points="827.1,486.5 826.8,488.9 826.0,493.9 825.7,496.3 824.6,494.3 825.3,489.4" fill="rgb(27, 19, 15)"/><polygon points="661.1,545.1 664.1,547.3 664.4,553.5 661.8,557.5 661.6,554.4 661.3,548.2" fill="rgb(31, 30, 27)"/><polygon points="670.5,542.2 676.2,543.5 676.4,549.6 670.9,554.4 665.1,553.3 664.8,547.1" fill="rgb(23, 18, 16)"/><polygon points="682.4,538.5 688.0,539.8 688.1,545.8 682.7,550.5 677.2,549.3 677.0,543.3" fill="rgb(24, 19, 16)"/><polygon points="693.9,534.9 699.2,536.2 699.2,542.1 694.1,546.8 688.7,545.6 688.6,539.6" fill="rgb(47, 27, 26)"/><polygon points="705.0,531.5 710.0,532.8 710.0,538.6 705.0,543.2 699.9,541.9 699.9,536.0" fill="rgb(38, 37, 34)"/><polygon points="715.6,528.2 720.4,529.5 720.3,535.3 715.4,539.7 710.6,538.4 710.6,532.6" fill="rgb(32, 31, 28)"/><polygon points="725.9,525.0 730.4,526.4 730.3,532.0 725.5,536.4 720.9,535.1 721.0,529.4" fill="rgb(36, 35, 32)"/><polygon points="735.7,521.9 740.1,523.3 739.8,528.9 735.3,533.1 730.8,531.8 731.0,526.2" fill="rgb(33, 32, 29)"/><polygon points="745.2,519.0 749.4,520.4 749.1,525.9 744.7,530.0 740.4,528.7 740.7,523.2" fill="rgb(46, 29, 22)"/><polygon points="754.4,516.1 758.4,517.6 758.0,523.0 753.7,527.0 749.7,525.7 750.0,520.2" fill="rgb(25, 18, 16)"/><polygon points="763.3,513.4 767.1,514.8 766.7,520.2 762.5,524.1 758.6,522.8 758.9,517.4" fill="rgb(46, 29, 23)"/><polygon points="771.8,510.7 775.5,512.2 775.0,517.4 770.9,521.3 767.2,520.0 767.6,514.7" fill="rgb(40, 39, 35)"/><polygon points="780.1,508.2 783.6,509.6 783.1,514.8 779.1,518.6 775.5,517.3 776.0,512.0" fill="rgb(40, 39, 35)"/><polygon points="788.1,505.7 791.4,507.1 790.9,512.3 787.0,516.0 783.6,514.7 784.1,509.5" fill="rgb(37, 36, 33)"/><polygon points="795.8,503.3 799.0,504.8 798.5,509.8 794.6,513.5 791.4,512.1 791.9,507.0" fill="rgb(47, 27, 23)"/><polygon points="803.3,501.0 806.4,502.4 805.8,507.4 802.1,511.0 798.9,509.7 799.5,504.6" fill="rgb(43, 28, 25)"/><polygon points="810.5,498.7 813.5,500.2 812.9,505.1 809.2,508.6 806.2,507.3 806.8,502.3" fill="rgb(24, 18, 17)"/><polygon points="817.5,496.6 820.4,498.0 819.7,502.9 816.2,506.3 813.3,505.0 813.9,500.1" fill="rgb(27, 20, 17)"/><polygon points="824.4,494.4 825.7,496.4 825.0,501.2 822.9,504.1 820.1,502.7 820.8,497.9" fill="rgb(34, 33, 29)"/><polygon points="826.0,493.9 825.7,496.4 825.0,501.2 824.6,503.6 825.0,501.2 825.7,496.4" fill="rgb(33, 32, 29)"/><polygon points="661.6,554.5 661.8,557.6 662.1,563.6 662.3,566.6 662.1,563.6 661.8,557.6" fill="rgb(31, 31, 27)"/><polygon points="664.7,553.5 670.6,554.6 670.8,560.6 665.3,565.6 662.1,563.6 661.8,557.6" fill="rgb(35, 34, 31)"/><polygon points="676.8,549.5 682.4,550.7 682.5,556.6 677.2,561.4 671.5,560.4 671.3,554.4" fill="rgb(38, 37, 34)"/><polygon points="688.4,545.8 693.7,547.0 693.8,552.8 688.6,557.5 683.2,556.4 683.1,550.5" fill="rgb(31, 30, 26)"/><polygon points="699.5,542.1 704.6,543.4 704.6,549.1 699.6,553.7 694.4,552.6 694.4,546.8" fill="rgb(47, 29, 24)"/><polygon points="710.3,538.6 715.1,539.9 715.0,545.5 710.2,550.0 705.2,548.9 705.3,543.2" fill="rgb(44, 29, 23)"/><polygon points="720.6,535.3 725.2,536.5 725.1,542.1 720.3,546.5 715.6,545.3 715.7,539.7" fill="rgb(31, 30, 26)"/><polygon points="730.5,532.0 735.0,533.3 734.8,538.8 730.2,543.1 725.7,541.9 725.8,536.3" fill="rgb(38, 37, 34)"/><polygon points="740.1,528.9 744.4,530.2 744.1,535.6 739.6,539.8 735.3,538.6 735.5,533.1" fill="rgb(22, 18, 15)"/><polygon points="749.4,525.9 753.4,527.2 753.1,532.5 748.8,536.6 744.6,535.4 744.9,530.0" fill="rgb(33, 32, 29)"/><polygon points="758.3,523.0 762.2,524.3 761.8,529.6 757.6,533.6 753.6,532.4 754.0,527.0" fill="rgb(39, 38, 35)"/><polygon points="766.9,520.2 770.7,521.5 770.2,526.7 766.1,530.6 762.3,529.4 762.7,524.1" fill="rgb(45, 31, 21)"/><polygon points="775.3,517.4 778.8,518.8 778.4,523.9 774.3,527.8 770.7,526.5 771.2,521.3" fill="rgb(36, 35, 31)"/><polygon points="783.3,514.8 786.8,516.2 786.2,521.2 782.3,525.0 778.8,523.8 779.3,518.6" fill="rgb(47, 30, 24)"/><polygon points="791.1,512.3 794.4,513.6 793.9,518.6 790.0,522.3 786.7,521.1 787.2,516.0" fill="rgb(36, 35, 31)"/><polygon points="798.7,509.8 801.8,511.2 801.2,516.1 797.5,519.7 794.3,518.5 794.9,513.5" fill="rgb(26, 20, 17)"/><polygon points="806.0,507.4 809.0,508.8 808.4,513.7 804.8,517.2 801.7,516.0 802.3,511.0" fill="rgb(31, 31, 27)"/><polygon points="813.1,505.1 816.0,506.5 815.3,511.3 811.8,514.8 808.8,513.5 809.4,508.7" fill="rgb(32, 31, 28)"/><polygon points="819.9,502.9 822.7,504.2 822.1,509.0 818.6,512.4 815.7,511.2 816.4,506.3" fill="rgb(50, 26, 26)"/><polygon points="824.9,501.2 824.6,503.6 823.9,508.4 823.6,510.7 822.4,508.9 823.1,504.1" fill="rgb(47, 26, 25)"/><polygon points="662.1,563.7 664.9,565.8 665.2,571.7 662.7,575.5 662.6,572.6 662.3,566.7" fill="rgb(41, 31, 22)"/><polygon points="671.2,560.6 676.8,561.6 677.0,567.5 671.7,572.3 666.0,571.4 665.7,565.5" fill="rgb(30, 29, 26)"/><polygon points="682.9,556.6 688.3,557.7 688.4,563.4 683.2,568.1 677.7,567.2 677.5,561.4" fill="rgb(44, 27, 25)"/><polygon points="694.1,552.8 699.3,553.9 699.3,559.5 694.2,564.1 689.0,563.2 688.9,557.4" fill="rgb(38, 38, 34)"/><polygon points="704.9,549.1 709.8,550.2 709.8,555.8 704.9,560.3 699.9,559.3 699.9,553.6" fill="rgb(31, 30, 27)"/><polygon points="715.3,545.5 720.0,546.7 719.9,552.2 715.2,556.6 710.4,555.6 710.5,550.0" fill="rgb(33, 33, 29)"/><polygon points="725.4,542.1 729.9,543.3 729.7,548.7 725.0,553.0 720.5,551.9 720.6,546.5" fill="rgb(38, 37, 33)"/><polygon points="735.0,538.8 739.3,540.0 739.1,545.3 734.6,549.5 730.2,548.5 730.4,543.1" fill="rgb(33, 33, 29)"/><polygon points="744.4,535.6 748.5,536.8 748.2,542.1 743.8,546.2 739.6,545.1 739.9,539.8" fill="rgb(38, 37, 33)"/><polygon points="753.4,532.5 757.3,533.7 757.0,539.0 752.7,543.0 748.7,541.9 749.0,536.6" fill="rgb(37, 36, 33)"/><polygon points="762.1,529.6 765.8,530.8 765.4,535.9 761.3,539.9 757.5,538.8 757.8,533.6" fill="rgb(36, 35, 32)"/><polygon points="770.5,526.7 774.1,527.9 773.6,533.0 769.6,536.9 765.9,535.7 766.3,530.6" fill="rgb(34, 33, 30)"/><polygon points="778.6,523.9 782.1,525.2 781.6,530.2 777.6,534.0 774.1,532.8 774.6,527.8" fill="rgb(43, 28, 24)"/><polygon points="786.5,521.2 789.8,522.5 789.3,527.4 785.4,531.2 782.0,530.0 782.5,525.0" fill="rgb(33, 32, 28)"/><polygon points="794.1,518.6 797.3,519.9 796.7,524.8 793.0,528.4 789.7,527.3 790.3,522.3" fill="rgb(35, 34, 31)"/><polygon points="801.4,516.1 804.5,517.4 803.9,522.2 800.3,525.8 797.2,524.6 797.7,519.7" fill="rgb(44, 26, 21)"/><polygon points="808.6,513.7 811.6,514.9 810.9,519.7 807.4,523.2 804.4,522.0 805.0,517.2" fill="rgb(38, 38, 34)"/><polygon points="815.5,511.3 818.4,512.6 817.7,517.3 814.2,520.7 811.3,519.6 812.0,514.8" fill="rgb(42, 28, 22)"/><polygon points="822.2,509.0 823.5,510.8 822.9,515.4 820.9,518.3 818.1,517.1 818.8,512.4" fill="rgb(45, 27, 24)"/><polygon points="823.9,508.4 823.5,510.8 822.9,515.4 822.5,517.7 822.9,515.4 823.5,510.8" fill="rgb(34, 33, 30)"/><polygon points="662.6,572.7 662.7,575.6 663.0,581.4 663.2,584.3 663.0,581.4 662.7,575.6" fill="rgb(44, 30, 23)"/><polygon points="665.6,571.6 671.3,572.5 671.5,578.2 666.1,583.1 663.0,581.4 662.7,575.6" fill="rgb(33, 32, 29)"/><polygon points="677.4,567.4 682.8,568.4 683.0,574.0 677.7,578.8 672.2,578.0 672.0,572.3" fill="rgb(47, 26, 22)"/><polygon points="688.7,563.4 693.9,564.3 694.0,569.9 688.9,574.6 683.6,573.7 683.5,568.1" fill="rgb(32, 31, 28)"/><polygon points="699.6,559.5 704.6,560.5 704.6,566.0 699.6,570.5 694.6,569.7 694.6,564.1" fill="rgb(32, 31, 28)"/><polygon points="710.1,555.7 714.9,556.8 714.8,562.2 710.0,566.6 705.2,565.7 705.2,560.3" fill="rgb(32, 31, 28)"/><polygon points="720.2,552.1 724.8,553.2 724.6,558.5 720.0,562.9 715.4,562.0 715.5,556.6" fill="rgb(33, 32, 29)"/><polygon points="730.0,548.7 734.3,549.7 734.1,555.0 729.6,559.3 725.2,558.3 725.3,553.0" fill="rgb(37, 36, 33)"/><polygon points="739.4,545.3 743.5,546.4 743.3,551.6 738.9,555.8 734.6,554.8 734.9,549.5" fill="rgb(31, 30, 27)"/><polygon points="748.4,542.1 752.4,543.2 752.1,548.3 747.8,552.4 743.8,551.4 744.1,546.2" fill="rgb(23, 19, 14)"/><polygon points="757.2,538.9 761.0,540.1 760.7,545.1 756.5,549.1 752.6,548.1 753.0,543.0" fill="rgb(22, 19, 14)"/><polygon points="765.7,535.9 769.4,537.1 768.9,542.1 764.9,546.0 761.2,544.9 761.5,539.9" fill="rgb(37, 36, 33)"/><polygon points="773.9,533.0 777.4,534.1 776.9,539.1 773.0,542.9 769.4,541.9 769.8,536.9" fill="rgb(30, 29, 26)"/><polygon points="781.8,530.2 785.2,531.3 784.7,536.2 780.8,540.0 777.4,538.9 777.9,534.0" fill="rgb(42, 28, 23)"/><polygon points="789.5,527.4 792.7,528.6 792.2,533.4 788.4,537.1 785.1,536.0 785.7,531.2" fill="rgb(22, 17, 14)"/><polygon points="796.9,524.8 800.0,525.9 799.5,530.7 795.8,534.3 792.6,533.2 793.2,528.4" fill="rgb(22, 17, 15)"/><polygon points="804.1,522.2 807.1,523.4 806.5,528.1 802.9,531.6 799.9,530.5 800.5,525.8" fill="rgb(47, 30, 23)"/><polygon points="811.1,519.7 814.0,520.9 813.4,525.5 809.9,529.0 806.9,527.9 807.6,523.2" fill="rgb(38, 37, 34)"/><polygon points="817.9,517.3 820.7,518.5 820.0,523.1 816.6,526.5 813.8,525.4 814.4,520.7" fill="rgb(44, 27, 23)"/><polygon points="822.9,515.5 822.5,517.8 821.8,522.4 821.5,524.7 820.4,522.9 821.1,518.3" fill="rgb(30, 29, 26)"/><polygon points="663.0,581.5 665.8,583.4 666.1,589.0 663.6,592.8 663.5,590.0 663.2,584.4" fill="rgb(30, 29, 26)"/><polygon points="671.9,578.2 677.4,579.0 677.6,584.6 672.3,589.4 666.8,588.7 666.5,583.1" fill="rgb(30, 29, 26)"/><polygon points="683.3,574.0 688.6,574.8 688.7,580.3 683.6,585.0 678.3,584.3 678.1,578.7" fill="rgb(32, 31, 28)"/><polygon points="694.3,569.9 699.3,570.7 699.3,576.2 694.4,580.8 689.3,580.0 689.2,574.5" fill="rgb(32, 32, 28)"/><polygon points="704.9,565.9 709.7,566.8 709.6,572.2 704.8,576.7 700.0,575.9 700.0,570.5" fill="rgb(23, 16, 14)"/><polygon points="715.1,562.2 719.7,563.1 719.5,568.3 714.9,572.8 710.2,571.9 710.3,566.6" fill="rgb(42, 27, 24)"/><polygon points="724.9,558.5 729.3,559.5 729.1,564.7 724.6,569.0 720.1,568.1 720.3,562.9" fill="rgb(21, 18, 16)"/><polygon points="734.4,555.0 738.6,556.0 738.3,561.1 733.9,565.3 729.7,564.4 729.9,559.2" fill="rgb(45, 25, 24)"/><polygon points="743.5,551.6 747.6,552.6 747.3,557.6 743.0,561.8 738.9,560.9 739.1,555.7" fill="rgb(37, 36, 33)"/><polygon points="752.4,548.3 756.2,549.3 755.9,554.3 751.7,558.4 747.8,557.4 748.1,552.4" fill="rgb(40, 28, 20)"/><polygon points="760.9,545.1 764.6,546.1 764.2,551.1 760.2,555.1 756.4,554.1 756.8,549.1" fill="rgb(29, 28, 25)"/><polygon points="769.2,542.0 772.7,543.1 772.3,548.0 768.3,551.9 764.7,550.9 765.1,546.0" fill="rgb(30, 29, 26)"/><polygon points="777.2,539.1 780.6,540.1 780.1,545.0 776.3,548.8 772.8,547.8 773.2,542.9" fill="rgb(22, 18, 16)"/><polygon points="784.9,536.2 788.2,537.3 787.7,542.0 783.9,545.8 780.6,544.8 781.1,540.0" fill="rgb(36, 36, 32)"/><polygon points="792.4,533.4 795.6,534.5 795.0,539.2 791.4,542.9 788.1,541.9 788.7,537.1" fill="rgb(33, 32, 29)"/><polygon points="799.7,530.7 802.7,531.8 802.1,536.4 798.6,540.0 795.5,539.0 796.0,534.3" fill="rgb(22, 16, 14)"/><polygon points="806.7,528.1 809.7,529.2 809.1,533.8 805.5,537.3 802.6,536.3 803.2,531.6" fill="rgb(32, 31, 28)"/><polygon points="813.6,525.5 816.4,526.7 815.7,531.2 812.3,534.7 809.5,533.6 810.1,529.0" fill="rgb(35, 34, 31)"/><polygon points="820.2,523.1 821.5,524.7 820.8,529.2 818.9,532.1 816.1,531.0 816.8,526.5" fill="rgb(23, 18, 16)"/><polygon points="821.8,522.5 821.5,524.7 820.8,529.2 820.5,531.5 820.8,529.2 821.5,524.7" fill="rgb(41, 28, 21)"/><polygon points="663.5,590.1 663.6,592.9 663.9,598.4 664.0,601.1 663.9,598.4 663.6,592.9" fill="rgb(32, 31, 28)"/><polygon points="666.4,589.0 672.0,589.6 672.2,595.1 666.9,600.0 663.9,598.4 663.6,592.9" fill="rgb(25, 17, 15)"/><polygon points="677.9,584.5 683.3,585.2 683.4,590.6 678.3,595.4 672.9,594.8 672.7,589.3" fill="rgb(33, 32, 29)"/><polygon points="689.0,580.2 694.1,581.0 694.1,586.3 689.2,591.0 684.0,590.3 683.9,584.9" fill="rgb(36, 35, 32)"/><polygon points="699.7,576.1 704.5,576.9 704.5,582.1 699.7,586.7 694.8,586.0 694.7,580.7" fill="rgb(31, 30, 27)"/><polygon points="709.9,572.1 714.6,572.9 714.5,578.1 709.8,582.6 705.1,581.9 705.1,576.6" fill="rgb(30, 30, 26)"/><polygon points="719.8,568.3 724.3,569.2 724.1,574.3 719.6,578.6 715.1,577.9 715.2,572.7" fill="rgb(30, 29, 26)"/><polygon points="729.4,564.6 733.7,565.5 733.5,570.6 729.0,574.8 724.7,574.1 724.9,568.9" fill="rgb(45, 28, 23)"/><polygon points="738.6,561.1 742.7,561.9 742.5,566.9 738.1,571.1 734.0,570.3 734.2,565.3" fill="rgb(33, 33, 30)"/><polygon points="747.5,557.6 751.5,558.5 751.1,563.5 747.0,567.5 743.0,566.7 743.2,561.7" fill="rgb(20, 18, 14)"/><polygon points="756.1,554.3 759.9,555.2 759.6,560.1 755.5,564.1 751.7,563.3 752.0,558.3" fill="rgb(33, 33, 30)"/><polygon points="764.5,551.1 768.1,552.0 767.7,556.8 763.7,560.8 760.0,559.9 760.4,555.0" fill="rgb(45, 26, 21)"/><polygon points="772.5,548.0 776.0,548.9 775.6,553.7 771.7,557.5 768.2,556.6 768.6,551.8" fill="rgb(34, 33, 30)"/><polygon points="780.3,544.9 783.7,545.9 783.2,550.6 779.4,554.4 776.0,553.5 776.5,548.7" fill="rgb(47, 26, 24)"/><polygon points="787.9,542.0 791.1,543.0 790.6,547.7 786.9,551.4 783.7,550.4 784.1,545.7" fill="rgb(47, 30, 20)"/><polygon points="795.2,539.2 798.3,540.2 797.8,544.8 794.2,548.4 791.0,547.5 791.6,542.8" fill="rgb(42, 26, 22)"/><polygon points="802.3,536.4 805.3,537.5 804.7,542.0 801.2,545.6 798.2,544.6 798.8,540.0" fill="rgb(43, 26, 24)"/><polygon points="809.2,533.8 812.1,534.8 811.5,539.3 808.0,542.8 805.1,541.8 805.7,537.3" fill="rgb(34, 33, 30)"/><polygon points="815.9,531.2 818.7,532.2 818.0,536.7 814.7,540.1 811.9,539.1 812.5,534.7" fill="rgb(31, 30, 27)"/><polygon points="820.8,529.3 820.5,531.5 819.9,536.0 819.5,538.1 818.4,536.5 819.1,532.1" fill="rgb(32, 31, 28)"/><polygon points="663.9,598.5 666.6,600.2 666.9,605.6 664.5,609.3 664.3,606.6 664.0,601.2" fill="rgb(23, 17, 15)"/><polygon points="672.6,595.0 677.9,595.6 678.1,600.9 673.0,605.7 667.5,605.3 667.3,599.9" fill="rgb(31, 31, 27)"/><polygon points="683.7,590.6 688.9,591.2 689.0,596.4 684.0,601.1 678.8,600.6 678.6,595.3" fill="rgb(23, 17, 13)"/><polygon points="694.5,586.2 699.4,586.9 699.4,592.1 694.6,596.7 689.6,596.1 689.5,590.9" fill="rgb(38, 24, 20)"/><polygon points="704.8,582.1 709.5,582.8 709.5,587.9 704.8,592.4 700.0,591.8 700.0,586.6" fill="rgb(31, 30, 27)"/><polygon points="714.8,578.1 719.3,578.8 719.2,583.9 714.6,588.3 710.1,587.7 710.1,582.5" fill="rgb(21, 16, 15)"/><polygon points="724.4,574.2 728.7,575.0 728.6,580.0 724.1,584.3 719.8,583.6 719.9,578.6" fill="rgb(28, 27, 24)"/><polygon points="733.7,570.5 737.9,571.3 737.6,576.2 733.3,580.4 729.1,579.8 729.3,574.8" fill="rgb(35, 34, 31)"/><polygon points="742.7,566.9 746.7,567.7 746.4,572.6 742.2,576.7 738.2,576.0 738.4,571.1" fill="rgb(29, 28, 25)"/><polygon points="751.4,563.4 755.2,564.3 754.9,569.1 750.8,573.1 746.9,572.4 747.2,567.5" fill="rgb(30, 29, 26)"/><polygon points="759.8,560.1 763.5,560.9 763.1,565.7 759.1,569.6 755.4,568.9 755.7,564.1" fill="rgb(31, 31, 27)"/><polygon points="767.9,556.8 771.4,557.7 771.0,562.4 767.1,566.3 763.6,565.5 763.9,560.7" fill="rgb(46, 24, 20)"/><polygon points="775.8,553.7 779.2,554.6 778.7,559.2 774.9,563.0 771.5,562.2 771.9,557.5" fill="rgb(45, 26, 20)"/><polygon points="783.4,550.6 786.7,551.5 786.2,556.1 782.5,559.8 779.2,559.0 779.6,554.4" fill="rgb(32, 31, 28)"/><polygon points="790.8,547.6 793.9,548.6 793.4,553.1 789.8,556.8 786.6,555.9 787.1,551.3" fill="rgb(31, 30, 27)"/><polygon points="798.0,544.8 801.0,545.7 800.4,550.2 796.9,553.8 793.8,552.9 794.4,548.4" fill="rgb(20, 17, 13)"/><polygon points="804.9,542.0 807.8,542.9 807.2,547.4 803.8,550.9 800.8,550.0 801.4,545.6" fill="rgb(43, 28, 21)"/><polygon points="811.7,539.3 814.5,540.3 813.9,544.6 810.5,548.1 807.6,547.2 808.2,542.8" fill="rgb(31, 31, 27)"/><polygon points="818.2,536.7 819.5,538.2 818.9,542.6 817.0,545.4 814.2,544.5 814.9,540.1" fill="rgb(28, 27, 24)"/><polygon points="819.8,536.0 819.5,538.2 818.9,542.6 818.6,544.7 818.9,542.6 819.5,538.2" fill="rgb(45, 27, 20)"/><polygon points="664.3,606.7 664.5,609.4 664.7,614.7 664.9,617.3 664.7,614.7 664.5,609.4" fill="rgb(32, 32, 29)"/><polygon points="667.2,605.5 672.7,605.9 672.9,611.2 667.7,616.0 664.7,614.7 664.5,609.4" fill="rgb(39, 28, 22)"/><polygon points="678.5,600.8 683.7,601.3 683.8,606.5 678.8,611.3 673.5,610.9 673.3,605.7" fill="rgb(29, 29, 25)"/><polygon points="689.3,596.4 694.3,596.9 694.3,602.0 689.5,606.6 684.4,606.2 684.3,601.1" fill="rgb(31, 30, 27)"/><polygon points="699.7,592.0 704.5,592.6 704.5,597.7 699.7,602.2 694.9,601.7 694.9,596.6" fill="rgb(31, 30, 27)"/><polygon points="709.8,587.9 714.3,588.5 714.3,593.5 709.7,597.9 705.1,597.4 705.1,592.4" fill="rgb(42, 24, 21)"/><polygon points="719.5,583.8 723.9,584.5 723.7,589.4 719.2,593.7 714.8,593.2 714.9,588.2" fill="rgb(42, 26, 22)"/><polygon points="728.8,580.0 733.0,580.6 732.8,585.5 728.5,589.7 724.3,589.2 724.4,584.2" fill="rgb(32, 31, 28)"/><polygon points="737.9,576.2 741.9,576.9 741.7,581.7 737.5,585.9 733.4,585.3 733.6,580.4" fill="rgb(42, 28, 22)"/><polygon points="746.7,572.6 750.5,573.3 750.2,578.1 746.1,582.1 742.2,581.5 742.5,576.7" fill="rgb(28, 27, 24)"/><polygon points="755.1,569.1 758.8,569.8 758.5,574.5 754.5,578.5 750.7,577.8 751.0,573.1" fill="rgb(29, 29, 25)"/><polygon points="763.3,565.7 766.9,566.4 766.5,571.1 762.6,575.0 759.0,574.3 759.3,569.6" fill="rgb(29, 28, 25)"/><polygon points="771.3,562.4 774.7,563.2 774.3,567.8 770.4,571.6 767.0,570.9 767.4,566.2" fill="rgb(32, 31, 28)"/><polygon points="778.9,559.2 782.2,560.0 781.8,564.5 778.0,568.3 774.7,567.6 775.1,563.0" fill="rgb(29, 29, 25)"/><polygon points="786.4,556.1 789.6,556.9 789.1,561.4 785.4,565.1 782.2,564.4 782.7,559.8" fill="rgb(28, 27, 24)"/><polygon points="793.6,553.1 796.7,554.0 796.1,558.4 792.6,562.0 789.5,561.2 790.0,556.8" fill="rgb(45, 29, 22)"/><polygon points="800.6,550.2 803.6,551.1 803.0,555.5 799.5,559.0 796.6,558.2 797.1,553.8" fill="rgb(35, 34, 31)"/><polygon points="807.4,547.4 810.3,548.3 809.7,552.6 806.3,556.1 803.4,555.3 804.0,550.9" fill="rgb(23, 16, 14)"/><polygon points="814.0,544.6 816.8,545.5 816.1,549.8 812.8,553.3 810.1,552.4 810.7,548.1" fill="rgb(29, 29, 25)"/><polygon points="818.9,542.6 818.6,544.8 817.9,549.1 817.6,551.2 816.5,549.7 817.2,545.4" fill="rgb(29, 28, 25)"/><polygon points="664.7,614.7 667.4,616.3 667.6,621.4 665.3,625.1 665.1,622.5 664.9,617.3" fill="rgb(33, 32, 29)"/><polygon points="673.2,611.1 678.5,611.5 678.6,616.6 673.6,621.4 668.3,621.1 668.1,616.0" fill="rgb(39, 25, 20)"/><polygon points="684.1,606.4 689.1,606.8 689.2,611.9 684.4,616.6 679.3,616.3 679.1,611.2" fill="rgb(19, 18, 15)"/><polygon points="694.6,601.9 699.4,602.4 699.5,607.4 694.7,611.9 689.9,611.6 689.8,606.6" fill="rgb(35, 34, 31)"/><polygon points="704.8,597.6 709.4,598.1 709.3,603.0 704.7,607.5 700.1,607.1 700.0,602.1" fill="rgb(34, 33, 30)"/><polygon points="714.5,593.4 719.0,593.9 718.9,598.8 714.4,603.2 709.9,602.8 710.0,597.8" fill="rgb(39, 27, 20)"/><polygon points="724.0,589.4 728.2,589.9 728.1,594.7 723.7,599.0 719.4,598.6 719.5,593.7" fill="rgb(44, 28, 20)"/><polygon points="733.1,585.5 737.2,586.1 737.0,590.8 732.7,595.0 728.6,594.5 728.8,589.7" fill="rgb(20, 16, 13)"/><polygon points="741.9,581.7 745.8,582.3 745.6,587.0 741.4,591.1 737.5,590.6 737.7,585.8" fill="rgb(33, 33, 30)"/><polygon points="750.5,578.0 754.2,578.7 753.9,583.3 749.9,587.3 746.1,586.8 746.4,582.1" fill="rgb(31, 30, 27)"/><polygon points="758.7,574.5 762.3,575.2 762.0,579.8 758.0,583.7 754.4,583.1 754.7,578.5" fill="rgb(30, 29, 26)"/><polygon points="766.7,571.1 770.2,571.8 769.8,576.3 766.0,580.2 762.5,579.5 762.8,575.0" fill="rgb(24, 16, 13)"/><polygon points="774.5,567.7 777.8,568.5 777.4,573.0 773.6,576.8 770.3,576.1 770.7,571.6" fill="rgb(24, 15, 15)"/><polygon points="782.0,564.5 785.2,565.3 784.7,569.7 781.1,573.4 777.8,572.8 778.3,568.3" fill="rgb(34, 33, 30)"/><polygon points="789.3,561.4 792.4,562.2 791.8,566.6 788.3,570.2 785.2,569.5 785.6,565.1" fill="rgb(35, 34, 31)"/><polygon points="796.3,558.4 799.3,559.2 798.8,563.5 795.3,567.1 792.3,566.4 792.8,562.0" fill="rgb(45, 26, 21)"/><polygon points="803.2,555.4 806.1,556.3 805.5,560.5 802.1,564.1 799.2,563.3 799.7,559.0" fill="rgb(42, 26, 23)"/><polygon points="809.9,552.6 812.6,553.4 812.0,557.7 808.7,561.1 805.9,560.4 806.5,556.1" fill="rgb(33, 33, 30)"/><polygon points="816.3,549.8 817.6,551.3 817.0,555.5 815.1,558.3 812.4,557.5 813.0,553.2" fill="rgb(27, 27, 24)"/><polygon points="817.9,549.1 817.6,551.3 817.0,555.5 816.7,557.6 817.0,555.5 817.6,551.3" fill="rgb(33, 32, 29)"/><polygon points="665.2,622.6 665.3,625.2 665.5,630.2 665.7,632.7 665.5,630.2 665.3,625.2" fill="rgb(32, 31, 28)"/><polygon points="668.0,621.4 673.3,621.6 673.5,626.6 668.4,631.4 665.5,630.2 665.3,625.2" fill="rgb(42, 28, 19)"/><polygon points="679.0,616.5 684.0,616.8 684.2,621.7 679.3,626.5 674.1,626.3 673.9,621.3" fill="rgb(41, 23, 19)"/><polygon points="689.5,611.8 694.4,612.2 694.5,617.1 689.7,621.7 684.8,621.5 684.7,616.5" fill="rgb(31, 31, 28)"/><polygon points="699.8,607.3 704.4,607.7 704.4,612.5 699.8,617.1 695.1,616.8 695.0,611.9" fill="rgb(32, 31, 28)"/><polygon points="709.6,603.0 714.1,603.4 714.0,608.2 709.5,612.6 705.0,612.3 705.0,607.4" fill="rgb(34, 33, 31)"/><polygon points="719.1,598.8 723.4,599.2 723.3,604.0 718.9,608.3 714.6,607.9 714.7,603.1" fill="rgb(34, 33, 31)"/><polygon points="728.3,594.7 732.4,595.2 732.3,599.9 728.0,604.1 723.8,603.7 724.0,599.0" fill="rgb(31, 30, 27)"/><polygon points="737.2,590.8 741.2,591.3 740.9,595.9 736.8,600.1 732.8,599.6 733.0,595.0" fill="rgb(42, 23, 19)"/><polygon points="745.8,587.0 749.6,587.5 749.3,592.1 745.3,596.2 741.4,595.7 741.7,591.1" fill="rgb(41, 27, 19)"/><polygon points="754.1,583.3 757.8,583.9 757.5,588.4 753.5,592.4 749.8,591.9 750.1,587.3" fill="rgb(28, 27, 24)"/><polygon points="762.2,579.7 765.7,580.3 765.3,584.8 761.5,588.7 757.9,588.2 758.3,583.7" fill="rgb(22, 15, 14)"/><polygon points="770.0,576.3 773.4,576.9 773.0,581.4 769.2,585.2 765.8,584.6 766.2,580.1" fill="rgb(32, 31, 28)"/><polygon points="777.6,572.9 780.8,573.6 780.4,578.0 776.7,581.7 773.4,581.1 773.8,576.7" fill="rgb(28, 28, 25)"/><polygon points="784.9,569.7 788.1,570.4 787.6,574.7 784.0,578.4 780.8,577.8 781.3,573.4" fill="rgb(39, 23, 20)"/><polygon points="792.1,566.5 795.1,567.3 794.5,571.5 791.0,575.2 788.0,574.5 788.5,570.2" fill="rgb(39, 24, 20)"/><polygon points="799.0,563.5 801.9,564.2 801.3,568.5 797.9,572.0 795.0,571.4 795.5,567.1" fill="rgb(20, 17, 14)"/><polygon points="805.7,560.5 808.5,561.3 807.9,565.5 804.6,569.0 801.7,568.3 802.3,564.0" fill="rgb(32, 31, 28)"/><polygon points="812.2,557.6 814.9,558.4 814.3,562.6 811.0,566.0 808.3,565.3 808.9,561.1" fill="rgb(30, 29, 26)"/><polygon points="817.0,555.5 816.7,557.6 816.1,561.8 815.8,563.8 814.7,562.4 815.3,558.2" fill="rgb(39, 25, 20)"/><polygon points="665.5,630.3 668.1,631.7 668.4,636.6 666.0,639.0 665.9,637.7 665.7,632.8" fill="rgb(28, 27, 24)"/><polygon points="673.8,626.5 679.0,626.7 679.1,631.6 674.2,635.2 669.0,636.3 668.8,631.4" fill="rgb(34, 33, 30)"/><polygon points="684.5,621.7 689.4,621.9 689.5,626.7 684.7,630.2 679.7,631.3 679.6,626.4" fill="rgb(22, 16, 15)"/><polygon points="694.8,617.0 699.5,617.3 699.5,622.0 694.9,625.4 690.1,626.4 690.0,621.6" fill="rgb(29, 29, 26)"/><polygon points="704.7,612.5 709.2,612.8 709.2,617.5 704.7,620.8 700.1,621.8 700.1,617.0" fill="rgb(32, 31, 29)"/><polygon points="714.3,608.1 718.6,608.5 718.5,613.1 714.2,616.4 709.8,617.2 709.8,612.5" fill="rgb(30, 29, 26)"/><polygon points="723.6,603.9 727.7,604.3 727.6,608.9 723.3,612.1 719.1,612.9 719.2,608.2" fill="rgb(21, 15, 14)"/><polygon points="732.5,599.8 736.5,600.3 736.3,604.8 732.2,607.9 728.1,608.7 728.3,604.1" fill="rgb(22, 17, 14)"/><polygon points="741.2,595.9 745.0,596.4 744.8,600.9 740.8,603.9 736.8,604.6 737.0,600.0" fill="rgb(30, 29, 26)"/><polygon points="749.6,592.1 753.3,592.6 753.0,597.0 749.1,600.0 745.3,600.6 745.5,596.1" fill="rgb(30, 29, 26)"/><polygon points="757.7,588.4 761.3,588.9 760.9,593.3 757.1,596.2 753.4,596.8 753.8,592.3" fill="rgb(27, 26, 23)"/><polygon points="765.6,584.8 769.0,585.4 768.6,589.7 764.9,592.5 761.4,593.1 761.7,588.7" fill="rgb(28, 27, 24)"/><polygon points="773.2,581.3 776.5,581.9 776.1,586.2 772.5,589.0 769.1,589.5 769.4,585.1" fill="rgb(36, 24, 21)"/><polygon points="780.6,578.0 783.8,578.6 783.3,582.8 779.8,585.5 776.5,586.0 776.9,581.7" fill="rgb(34, 33, 30)"/><polygon points="787.8,574.7 790.8,575.3 790.3,579.6 786.9,582.2 783.7,582.6 784.2,578.4" fill="rgb(23, 16, 13)"/><polygon points="794.7,571.5 797.7,572.2 797.2,576.4 793.9,578.9 790.8,579.4 791.2,575.1" fill="rgb(38, 23, 20)"/><polygon points="801.5,568.4 804.4,569.1 803.8,573.3 800.6,575.8 797.6,576.2 798.1,572.0" fill="rgb(40, 25, 21)"/><polygon points="808.1,565.4 810.8,566.1 810.2,570.3 807.1,572.7 804.2,573.1 804.7,568.9" fill="rgb(26, 26, 23)"/><polygon points="814.5,562.5 815.8,563.9 815.2,568.0 813.4,569.7 810.6,570.1 811.2,566.0" fill="rgb(29, 28, 25)"/><polygon points="816.1,561.8 815.8,563.9 815.2,568.0 815.0,569.0 815.2,568.0 815.8,563.9" fill="rgb(36, 23, 18)"/><polygon points="665.9,637.8 666.0,639.0 666.0,639.0 666.0,639.0 666.0,639.0 666.0,639.0" fill="rgb(29, 29, 26)"/><polygon points="668.7,636.5 673.8,635.3 673.8,635.3 668.7,637.7 666.0,639.0 666.0,639.0" fill="rgb(32, 31, 28)"/><polygon points="679.4,631.5 684.4,630.4 684.4,630.4 679.5,632.7 674.5,635.0 674.5,635.0" fill="rgb(28, 27, 24)"/><polygon points="689.8,626.6 694.6,625.6 694.6,625.6 689.8,627.8 685.0,630.1 685.0,630.1" fill="rgb(29, 28, 25)"/><polygon points="699.8,622.0 704.4,621.0 704.4,621.0 699.8,623.1 695.2,625.3 695.2,625.3" fill="rgb(28, 27, 24)"/><polygon points="709.5,617.4 713.9,616.5 713.9,616.5 709.5,618.6 705.0,620.7 705.0,620.7" fill="rgb(31, 30, 27)"/><polygon points="718.8,613.1 723.1,612.2 723.1,612.2 718.8,614.2 714.4,616.2 714.4,616.2" fill="rgb(26, 25, 22)"/><polygon points="727.8,608.9 731.9,608.0 731.9,608.0 727.8,610.0 723.6,611.9 723.6,611.9" fill="rgb(19, 15, 14)"/><polygon points="736.6,604.8 740.5,604.0 740.5,604.0 736.5,605.9 732.4,607.8 732.4,607.8" fill="rgb(33, 32, 29)"/><polygon points="745.0,600.8 748.8,600.1 748.8,600.1 745.0,601.9 741.0,603.8 741.0,603.8" fill="rgb(33, 32, 29)"/><polygon points="753.2,597.0 756.9,596.3 756.9,596.3 753.1,598.1 749.3,599.9 749.3,599.9" fill="rgb(39, 27, 19)"/><polygon points="761.1,593.3 764.7,592.6 764.7,592.6 761.0,594.3 757.4,596.1 757.4,596.1" fill="rgb(18, 16, 14)"/><polygon points="768.8,589.7 772.3,589.1 772.3,589.1 768.7,590.7 765.1,592.4 765.1,592.4" fill="rgb(41, 26, 20)"/><polygon points="776.3,586.2 779.6,585.6 779.6,585.6 776.2,587.2 772.7,588.9 772.7,588.9" fill="rgb(26, 25, 22)"/><polygon points="783.5,582.8 786.7,582.3 786.7,582.3 783.4,583.8 780.0,585.4 780.0,585.4" fill="rgb(32, 31, 28)"/><polygon points="790.5,579.5 793.6,579.0 793.6,579.0 790.4,580.5 787.1,582.1 787.1,582.1" fill="rgb(27, 27, 24)"/><polygon points="797.4,576.3 800.4,575.9 800.4,575.9 797.2,577.3 794.1,578.8 794.1,578.8" fill="rgb(26, 25, 22)"/><polygon points="804.0,573.2 806.9,572.8 806.9,572.8 803.9,574.2 800.8,575.7 800.8,575.7" fill="rgb(18, 14, 13)"/><polygon points="810.4,570.2 813.3,569.8 813.3,569.8 810.3,571.2 807.3,572.6 807.3,572.6" fill="rgb(28, 27, 24)"/><polygon points="815.1,568.0 815.0,569.0 815.0,569.0 815.0,569.0 813.6,569.6 813.6,569.6" fill="rgb(33, 32, 29)"/><path d="M655 426 L839 405.5" stroke="#3a3835" stroke-width="1"/></svg></div></body></html>
